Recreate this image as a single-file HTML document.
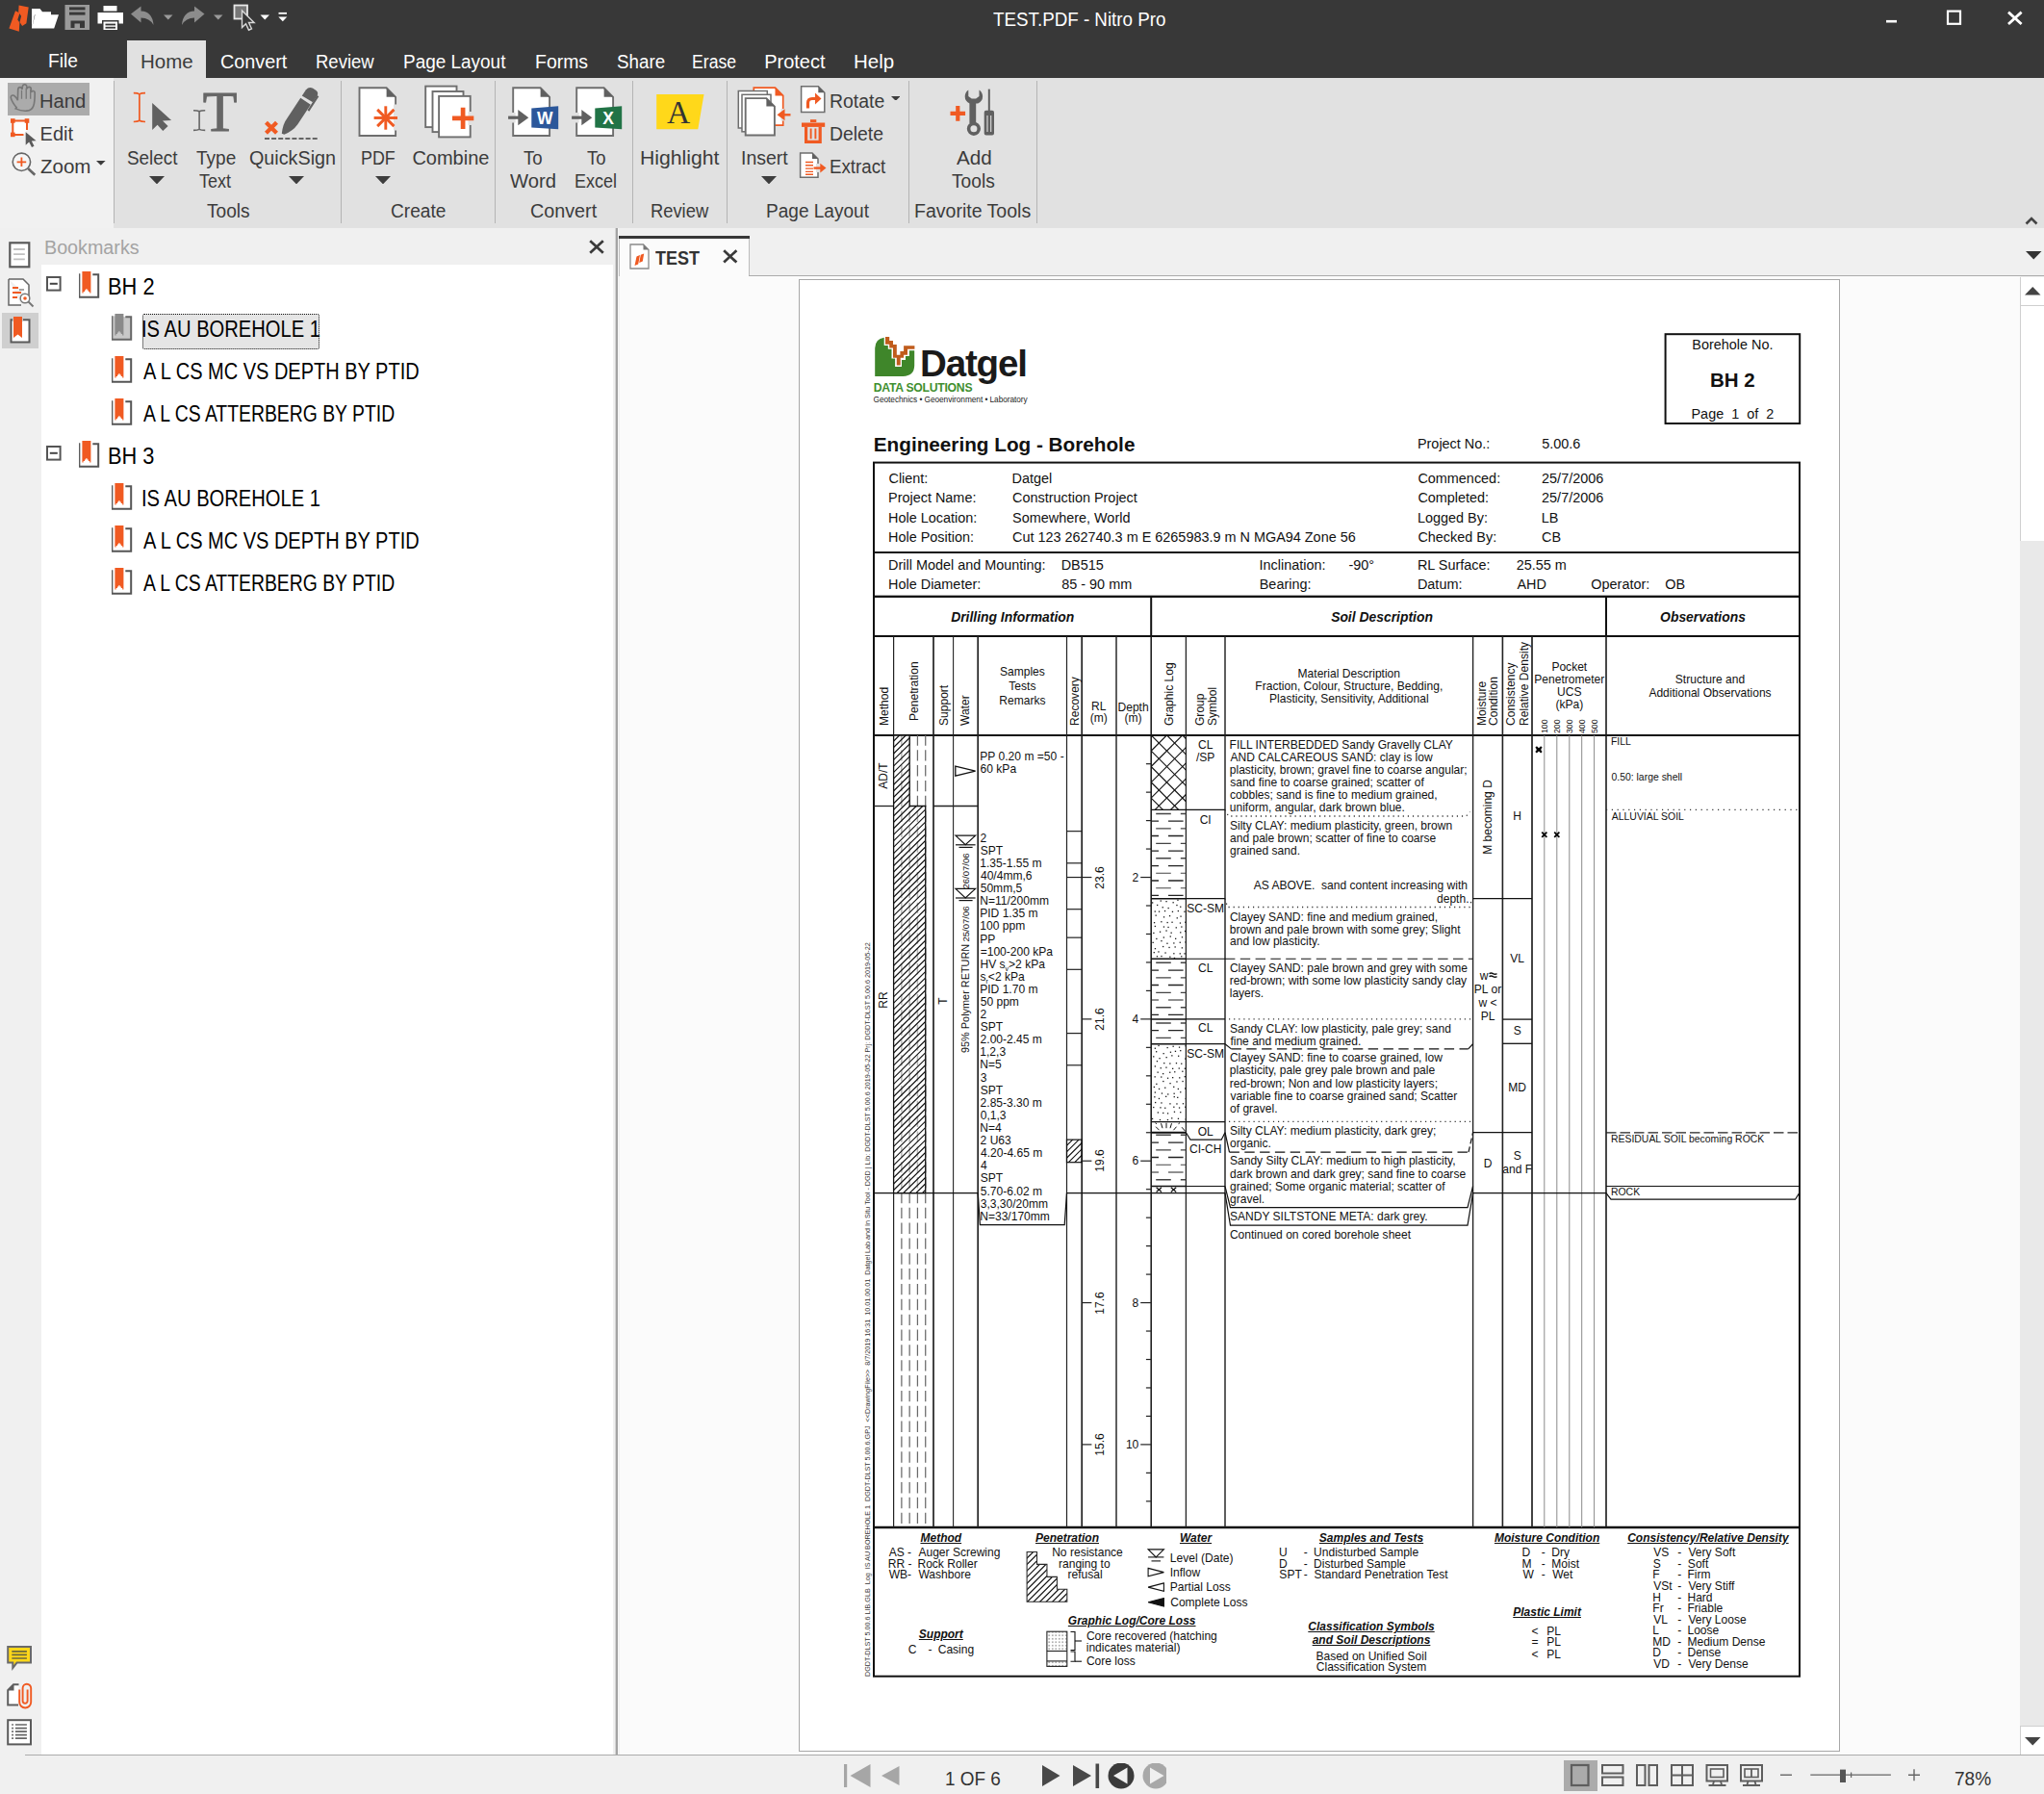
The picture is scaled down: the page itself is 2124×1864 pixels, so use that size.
<!DOCTYPE html>
<html><head><meta charset="utf-8"><title>TEST.PDF - Nitro Pro</title>
<style>
html,body{margin:0;padding:0}
body{width:2124px;height:1864px;overflow:hidden;position:relative;background:#f0f0f0;font-family:"Liberation Sans",sans-serif;color:#111}
.a{position:absolute;width:0;height:0}
.a span{position:absolute;line-height:1em;white-space:pre;left:0}
.a .c{transform:translateX(-50%)}
.a .r{transform:translateX(-100%)}
.a span span{position:static}
.f0{font-size:38.5px;top:-32px}
.f1{font-size:12.2px;top:-10px}
.f2{font-size:8.3px;top:-7px}
.f3{font-size:14.43px;top:-12px}
.f4{font-size:20.5px;top:-17px}
.f5{font-size:20.72px;top:-17px}
.f6{font-size:13.9px;top:-11px}
.f7{font-size:12.05px;top:-10px}
.f8{font-size:8.7px;top:-7px}
.f9{font-size:9.5px;top:-8px}
.f10{font-size:10.9px;top:-9px}
.f11{font-size:10.45px;top:-8px}
.f12{font-size:12px;top:-10px}
.f13{font-size:7.2px;top:-6px}
.f14{font-size:20px;top:-17px}
.f15{font-size:23px;top:-19px}
.b{position:absolute;display:block}
.ov{position:absolute;left:0;top:0;pointer-events:none}
</style></head>
<body>
<div class="b" style="left:0px;top:0px;width:2124px;height:81px;background:#383838;"></div>
<div class="b" style="left:132px;top:42px;width:82px;height:39px;background:#e1e1e1;"></div>
<div class="b" style="left:0px;top:81px;width:2124px;height:156px;background:#e1e1e1;"></div>
<div class="b" style="left:0px;top:81px;width:118px;height:156px;background:#f1f1f1;"></div>
<div class="b" style="left:0px;top:237px;width:2124px;height:1627px;background:#f0f0f0;"></div>
<div class="b" style="left:117.8px;top:84px;width:1.3px;height:148px;background:#b4b4b4;"></div>
<div class="b" style="left:353.6px;top:84px;width:1.3px;height:148px;background:#b4b4b4;"></div>
<div class="b" style="left:514.2px;top:84px;width:1.3px;height:148px;background:#b4b4b4;"></div>
<div class="b" style="left:657.1px;top:84px;width:1.3px;height:148px;background:#b4b4b4;"></div>
<div class="b" style="left:754.9px;top:84px;width:1.3px;height:148px;background:#b4b4b4;"></div>
<div class="b" style="left:944px;top:84px;width:1.3px;height:148px;background:#b4b4b4;"></div>
<div class="b" style="left:1076.8px;top:84px;width:1.3px;height:148px;background:#b4b4b4;"></div>
<div class="a" style="left:1031.92px;top:27px"><span class="l f4" style="color:#fff;transform:scaleX(0.9160);transform-origin:0 0;">TEST.PDF - Nitro Pro</span></div>
<svg class="b" style="left:1955px;top:8px" width="160" height="24" viewBox="0 0 160 24"><path d="M5 14.2 h11" stroke="#fff" stroke-width="2.6"/><rect x="69" y="3.6" width="13" height="13.2" fill="none" stroke="#fff" stroke-width="2.2"/><path d="M132 4.6 l13.6 12.4 M145.6 4.6 l-13.6 12.4" stroke="#fff" stroke-width="2.8"/></svg>
<svg class="b" style="left:0px;top:0px" width="310" height="42" viewBox="0 0 310 42">
<path d="M9.400 29.400 L16 11.300 L20.500 13.600 L18.300 20.500 L20.400 23.600 L19.800 32.800 Z" fill="#f05a22"/>
<path d="M19.600 5.500 L29.700 7.400 L27.400 24.300 L23.100 27 L20.500 23.100 L22.100 16.800 L19.200 12.500 Z" fill="#f05a22"/>
<path d="M33 29.500 V9 h8.500 l2.500 3.300 h9 v3 h-17 z M36.500 15.300 h24.500 l-4.800 14.200 h-23.200 z" fill="#fff"/>
<rect x="67.5" y="5" width="25.5" height="26" fill="#9a9a9a"/><rect x="72" y="7.4" width="16.5" height="3" fill="#383838"/><rect x="72" y="12.6" width="16.5" height="3" fill="#383838"/><path d="M73.5 21.5 h14.5 v7.5 h-5 v-4.5 h-5.5 v4.5 h-4 z" fill="#383838"/>
<path d="M107.5 6 h14 v5.5 h-14z M101.5 13 h26.5 v11.5 h-4.500 v-3.5 h-17.500 v3.5 h-4.500z M107.5 22.6 h14.5 v8.4 h-14.500z" fill="#fff"/><rect x="109.500" y="24.6" width="10.500" height="1.800" fill="#383838"/><rect x="109.500" y="27.8" width="10.500" height="1.800" fill="#383838"/>
<path d="M136 14.5 l10.5 -8 v5 q12 0.500 13 14.500 q-4 -7.500 -13 -7.500 v5 z" fill="#8c8c8c"/>
<path d="M170 15.5 h9.500 l-4.750 5 z" fill="#9a9a9a"/>
<path d="M212.500 14.500 l-10.500 -8 v5 q-12 0.500 -13 14.500 q4 -7.500 13 -7.500 v5 z" fill="#8c8c8c"/>
<path d="M222 15.500 h9.500 l-4.750 5 z" fill="#9a9a9a"/>
<rect x="243.500" y="5.500" width="13.500" height="14" fill="#777" stroke="#e8e8e8" stroke-width="1.800"/>
<path d="M251.500 11 v17.500 l4 -3.800 l3 6.500 l3 -1.400 l-3 -6.300 h5.600 z" fill="#383838" stroke="#d8d8d8" stroke-width="1.400"/>
<path d="M270.500 15.500 h9.500 l-4.750 5 z" fill="#fff"/>
<path d="M289.500 13.800 h8.500" stroke="#fff" stroke-width="1.800"/><path d="M289.300 17.500 h9 l-4.500 4.800 z" fill="#fff"/>
</svg>
<div class="a" style="left:49.56px;top:70px"><span class="l f14" style="color:#fff;transform:scaleX(0.9597);transform-origin:0 0;">File</span></div>
<div class="a" style="left:145.96px;top:71px"><span class="l f14" style="color:#3b3b3b;transform:scaleX(1.0255);transform-origin:0 0;">Home</span></div>
<div class="a" style="left:229.41px;top:71px"><span class="l f14" style="color:#fff;transform:scaleX(0.9899);transform-origin:0 0;">Convert</span></div>
<div class="a" style="left:327.92px;top:71px"><span class="l f14" style="color:#fff;transform:scaleX(0.9250);transform-origin:0 0;">Review</span></div>
<div class="a" style="left:419.38px;top:71px"><span class="l f14" style="color:#fff;transform:scaleX(0.9476);transform-origin:0 0;">Page Layout</span></div>
<div class="a" style="left:556.34px;top:71px"><span class="l f14" style="color:#fff;transform:scaleX(0.9724);transform-origin:0 0;">Forms</span></div>
<div class="a" style="left:640.66px;top:71px"><span class="l f14" style="color:#fff;transform:scaleX(0.9380);transform-origin:0 0;">Share</span></div>
<div class="a" style="left:719.39px;top:71px"><span class="l f14" style="color:#fff;transform:scaleX(0.8815);transform-origin:0 0;">Erase</span></div>
<div class="a" style="left:794.2px;top:71px"><span class="l f14" style="color:#fff;transform:scaleX(1.0000);transform-origin:0 0;">Protect</span></div>
<div class="a" style="left:887.16px;top:71px"><span class="l f14" style="color:#fff;transform:scaleX(1.0258);transform-origin:0 0;">Help</span></div>
<div class="b" style="left:8px;top:86px;width:85px;height:33.7px;background:#ababab;"></div>
<div class="a" style="left:41.29px;top:112px"><span class="l f14" style="color:#3b3b3b;transform:scaleX(1.0089);transform-origin:0 0;">Hand</span></div>
<div class="a" style="left:41.6px;top:146px"><span class="l f14" style="color:#3b3b3b;transform:scaleX(1.0000);transform-origin:0 0;">Edit</span></div>
<div class="a" style="left:41.68px;top:180px"><span class="l f14" style="color:#3b3b3b;transform:scaleX(1.0264);transform-origin:0 0;">Zoom</span></div>
<div class="a" style="left:131.55px;top:171px"><span class="l f14" style="color:#3b3b3b;transform:scaleX(0.9451);transform-origin:0 0;">Select</span></div>
<div class="a" style="left:203.62px;top:171px"><span class="l f14" style="color:#3b3b3b;transform:scaleX(0.9501);transform-origin:0 0;">Type</span></div>
<div class="a" style="left:207.44px;top:195px"><span class="l f14" style="color:#3b3b3b;transform:scaleX(0.9006);transform-origin:0 0;">Text</span></div>
<div class="a" style="left:258.51px;top:171px"><span class="l f14" style="color:#3b3b3b;transform:scaleX(0.9876);transform-origin:0 0;">QuickSign</span></div>
<div class="a" style="left:214.52px;top:226px"><span class="l f14" style="color:#3b3b3b;transform:scaleX(0.9561);transform-origin:0 0;">Tools</span></div>
<div class="a" style="left:375.27px;top:171px"><span class="l f14" style="color:#3b3b3b;transform:scaleX(0.8939);transform-origin:0 0;">PDF</span></div>
<div class="a" style="left:428.4px;top:171px"><span class="l f14" style="color:#3b3b3b;transform:scaleX(1.0000);transform-origin:0 0;">Combine</span></div>
<div class="a" style="left:406.44px;top:226px"><span class="l f14" style="color:#3b3b3b;transform:scaleX(0.9553);transform-origin:0 0;">Create</span></div>
<div class="a" style="left:544.23px;top:171px"><span class="l f14" style="color:#3b3b3b;transform:scaleX(0.9296);transform-origin:0 0;">To</span></div>
<div class="a" style="left:530.2px;top:195px"><span class="l f14" style="color:#3b3b3b;transform:scaleX(1.0108);transform-origin:0 0;">Word</span></div>
<div class="a" style="left:610.33px;top:171px"><span class="l f14" style="color:#3b3b3b;transform:scaleX(0.9246);transform-origin:0 0;">To</span></div>
<div class="a" style="left:597.46px;top:195px"><span class="l f14" style="color:#3b3b3b;transform:scaleX(0.8980);transform-origin:0 0;">Excel</span></div>
<div class="a" style="left:551.21px;top:226px"><span class="l f14" style="color:#3b3b3b;transform:scaleX(0.9870);transform-origin:0 0;">Convert</span></div>
<div class="a" style="left:665.01px;top:171px"><span class="l f14" style="color:#3b3b3b;transform:scaleX(1.0591);transform-origin:0 0;">Highlight</span></div>
<div class="a" style="left:676.13px;top:226px"><span class="l f14" style="color:#3b3b3b;transform:scaleX(0.9172);transform-origin:0 0;">Review</span></div>
<div class="a" style="left:769.74px;top:171px"><span class="l f14" style="color:#3b3b3b;transform:scaleX(0.9751);transform-origin:0 0;">Insert</span></div>
<div class="a" style="left:862.05px;top:112px"><span class="l f14" style="color:#3b3b3b;transform:scaleX(0.9717);transform-origin:0 0;">Rotate</span></div>
<div class="a" style="left:862.05px;top:146px"><span class="l f14" style="color:#3b3b3b;transform:scaleX(0.9693);transform-origin:0 0;">Delete</span></div>
<div class="a" style="left:862.1px;top:180px"><span class="l f14" style="color:#3b3b3b;transform:scaleX(0.9356);transform-origin:0 0;">Extract</span></div>
<div class="a" style="left:795.78px;top:226px"><span class="l f14" style="color:#3b3b3b;transform:scaleX(0.9521);transform-origin:0 0;">Page Layout</span></div>
<div class="a" style="left:993.7px;top:171px"><span class="l f14" style="color:#3b3b3b;transform:scaleX(1.0320);transform-origin:0 0;">Add</span></div>
<div class="a" style="left:989.22px;top:195px"><span class="l f14" style="color:#3b3b3b;transform:scaleX(0.9583);transform-origin:0 0;">Tools</span></div>
<div class="a" style="left:950.44px;top:226px"><span class="l f14" style="color:#3b3b3b;transform:scaleX(0.9762);transform-origin:0 0;">Favorite Tools</span></div>
<svg class="b" style="left:154.9px;top:183px" width="16" height="8.4" viewBox="0 0 16 8.4"><path d="M0 0 h16 l-8 8.4 z" fill="#3d3d3d"/></svg>
<svg class="b" style="left:299.9px;top:183px" width="16" height="8.4" viewBox="0 0 16 8.4"><path d="M0 0 h16 l-8 8.4 z" fill="#3d3d3d"/></svg>
<svg class="b" style="left:390.3px;top:183px" width="16" height="8.4" viewBox="0 0 16 8.4"><path d="M0 0 h16 l-8 8.4 z" fill="#3d3d3d"/></svg>
<svg class="b" style="left:791.4px;top:183px" width="16" height="8.4" viewBox="0 0 16 8.4"><path d="M0 0 h16 l-8 8.4 z" fill="#3d3d3d"/></svg>
<svg class="b" style="left:100.4px;top:167.4px" width="9.6" height="4.8" viewBox="0 0 9.6 4.8"><path d="M0 0 h9.6 l-4.8 4.8 z" fill="#3d3d3d"/></svg>
<svg class="b" style="left:925.8px;top:99.6px" width="9.6" height="4.8" viewBox="0 0 9.6 4.8"><path d="M0 0 h9.6 l-4.8 4.8 z" fill="#3d3d3d"/></svg>
<svg class="ov" width="1100" height="200" viewBox="0 0 1100 200"><path d="M17 112 q-4 -5 -5 -9 q0 -2.500 2 -2.200 q2 0.500 4 4.500 l0.300 -10 q0.200 -2 1.800 -2 q1.600 0 1.800 2 l0.300 -2.500 q0.300 -2 1.900 -2 q1.700 0 1.900 2 l0.200 2 q0.400 -1.800 1.900 -1.700 q1.600 0.100 1.700 2 l0.100 3 q0.500 -1.500 1.800 -1.300 q1.500 0.300 1.400 2.200 q0 8 -1.200 11.500 q-1.300 4.200 -6 4.500 q-5 0.300 -9.800 -2 z" fill="#ababab" stroke="#777" stroke-width="1.400" transform="translate(11.300,116.600) scale(1.180,1.130) translate(-12,-116.300)"/>
<path d="M21.500 96 v8 M25.500 94 v10 M29.300 95.500 v8.500" stroke="#777" stroke-width="1.100" fill="none" transform="translate(11.300,116.600) scale(1.180,1.130) translate(-12,-116.300)"/>
<path d="M28 135 V125.500 H13.300 V139.900 H24.500" fill="#fff" stroke="#f05a22" stroke-width="2"/>
<rect x="11" y="123.2" width="4.600" height="4.600" fill="#f05a22"/>
<rect x="25.7" y="123.2" width="4.600" height="4.600" fill="#f05a22"/>
<rect x="11" y="137.6" width="4.600" height="4.600" fill="#f05a22"/>
<path d="M26.700 137.300 v13.500 l3.500 -3.200 l2.800 5.500 l2.500 -1.300 l-2.700 -5.300 l4.800 -0.300 z" fill="#5a5a5a"/>
<circle cx="22.400" cy="168.300" r="9.200" fill="#f6f6f6" stroke="#666" stroke-width="1.600"/><path d="M17.600 168.300 h9.600 M22.400 163.500 v9.600" stroke="#f05a22" stroke-width="1.800"/><path d="M29.300 175.300 l7 6.500" stroke="#666" stroke-width="2.600"/>
<path d="M144.900 97.500 V125.700 M138.800 96.700 q4.500 0 6.100 1.200 q1.600 -1.200 6.100 -1.200 M138.800 126.500 q4.500 0 6.100 -1.200 q1.600 1.200 6.100 1.200" fill="none" stroke="#f05a22" stroke-width="1.700"/>
<path d="M158.200 106.900 V135.100 L163.600 129.800 L169.300 135.900 L174.600 131 L169 125.500 L178.100 125.100 Z" fill="#606060"/>
<path d="M207.100 115.500 V134.700 M201 114.800 q4.500 0 6.100 1 q1.600 -1 6.100 -1 M201 135.400 q4.500 0 6.100 -1 q1.600 1 6.100 1" fill="none" stroke="#666" stroke-width="1.600"/>
<text x="210.700" y="136.200" font-family="Liberation Serif,serif" font-size="58.500" fill="#666" stroke="#666" stroke-width="0.900">T</text>
<path d="M276.500 127.200 l11 11 M287.500 127.200 l-11 11" stroke="#f05a22" stroke-width="4.200"/>
<path d="M275 144.100 H329.800" stroke="#666" stroke-width="2" stroke-dasharray="5 2.100"/>
<path d="M292.800 138.800 q1 -10 6 -16.500 l13.500 -20.500 l10.500 7 l-13.500 20.500 q-5 7 -14 10.500 z" fill="#606060"/>
<path d="M313.800 99.500 l4.200 -6.300 q3 -3.700 7.200 -1.500 l3.300 2.200 q3 2.500 0.800 6 l-4.200 6.400 z" fill="#606060"/>
<path d="M329.500 99 l1.800 1.200 l-10 15.500 l-1.800 -1.200 z" fill="#606060"/>
<path d="M373.5 91.3 H401.6 L411.1 100.8 V141 H373.5 Z" fill="#fff" stroke="#6e6e6e" stroke-width="1.9"/><path d="M401.6 91.3 V100.8 H411.1 Z" fill="#606060"/>
<rect x="409" y="108.500" width="4" height="27" fill="#e1e1e1"/>
<line x1="388.6" y1="122.5" x2="413" y2="122.5" stroke="#f05a22" stroke-width="2.900"/>
<line x1="392.173" y1="113.873" x2="409.427" y2="131.127" stroke="#f05a22" stroke-width="2.900"/>
<line x1="400.8" y1="110.3" x2="400.8" y2="134.7" stroke="#f05a22" stroke-width="2.900"/>
<line x1="409.427" y1="113.873" x2="392.173" y2="131.127" stroke="#f05a22" stroke-width="2.900"/>
<rect x="442.2" y="89.6" width="32.3" height="42.5" fill="#fff" stroke="#6e6e6e" stroke-width="1.900"/>
<rect x="449.5" y="95" width="32" height="42.1" fill="#fff" stroke="#6e6e6e" stroke-width="1.900"/>
<rect x="456.1" y="99.9" width="32.6" height="42.5" fill="#fff" stroke="#6e6e6e" stroke-width="1.900"/>
<rect x="486.500" y="116" width="4.500" height="14" fill="#e1e1e1"/>
<path d="M470 122.900 h22.300 M481.100 111.800 v22.300" stroke="#f05a22" stroke-width="4.700"/>
<path d="M533.2 91.3 H561.6 L571.1 100.8 V141 H533.2 Z" fill="#fff" stroke="#6e6e6e" stroke-width="1.9"/><path d="M561.6 91.3 V100.8 H571.1 Z" fill="#606060"/>
<rect x="530.7" y="117" width="5" height="10.500" fill="#e1e1e1"/>
<path d="M528.1 122.200 h12" stroke="#606060" stroke-width="3.200"/><path d="M538.3 114.100 v16.100 l11 -8.050 z" fill="#606060"/>
<path d="M552.3 112.600 L580.2 110.200 V134.200 L552.3 132.400 Z" fill="#2b579a"/>
<text x="566.2" y="129.200" font-family="Liberation Sans,sans-serif" font-size="17.500" font-weight="bold" fill="#fff" text-anchor="middle">W</text>
<path d="M599.2 91.3 H627.6 L637.1 100.8 V141 H599.2 Z" fill="#fff" stroke="#6e6e6e" stroke-width="1.9"/><path d="M627.6 91.3 V100.8 H637.1 Z" fill="#606060"/>
<rect x="596.7" y="117" width="5" height="10.500" fill="#e1e1e1"/>
<path d="M594.1 122.200 h12" stroke="#606060" stroke-width="3.200"/><path d="M604.3 114.100 v16.100 l11 -8.050 z" fill="#606060"/>
<path d="M618.3 112.600 L646.2 110.200 V134.200 L618.3 132.400 Z" fill="#217346"/>
<text x="632.2" y="129.200" font-family="Liberation Sans,sans-serif" font-size="17.500" font-weight="bold" fill="#fff" text-anchor="middle">X</text>
<path d="M682.200 98 H731.500 L725.300 134.300 H682.200 Z" fill="#ffd81a"/>
<text x="705.200" y="127.600" font-family="Liberation Serif,serif" font-size="33.500" fill="#333" text-anchor="middle">A</text>
<path d="M783.300 91.200 H805.500 L813.700 99.400 V130.200 H783.300 Z" fill="#fff" stroke="#f05a22" stroke-width="1.700"/><path d="M805.500 91.200 V99.400 H813.700 Z" fill="#f05a22"/>
<rect x="811.500" y="113" width="4.500" height="12.500" fill="#e1e1e1"/>
<rect x="767.300" y="94.500" width="30" height="38.500" fill="#fff" stroke="#6e6e6e" stroke-width="1.500"/>
<rect x="771" y="98.300" width="30" height="38.500" fill="#fff" stroke="#6e6e6e" stroke-width="1.500"/>
<path d="M774.7 102.1 H796.4 L804.9 110.6 V140.5 H774.7 Z" fill="#fff" stroke="#6e6e6e" stroke-width="1.9"/><path d="M796.4 102.1 V110.6 H804.9 Z" fill="#606060"/>
<path d="M821.500 119.300 h-8" stroke="#f05a22" stroke-width="2.400"/><path d="M815.500 113.300 v12 l-8 -6 z" fill="#f05a22"/>
<path d="M832.6 89.8 H850.3 L856.8 96.3 V116.5 H832.6 Z" fill="#fff" stroke="#6e6e6e" stroke-width="1.5"/><path d="M850.3 89.8 V96.3 H856.8 Z" fill="#606060"/>
<path d="M839.500 112.500 v-5.500 q0 -4.500 4.500 -4.500 h4" fill="none" stroke="#f05a22" stroke-width="3.200"/><path d="M847 96.500 l6.500 6 l-6.500 6 z" fill="#f05a22"/>
<path d="M833 129.700 h24.200" stroke="#f05a22" stroke-width="4.400"/><path d="M842 125.600 h6.300" stroke="#f05a22" stroke-width="2.800"/><path d="M837.600 132 v15.400 h14.600 v-15.400" fill="none" stroke="#f05a22" stroke-width="3.200"/><path d="M842.600 133.500 v10.800 M847.400 133.500 v10.800" stroke="#f05a22" stroke-width="1.900"/>
<path d="M831.6 159 H844 L850 165 V184.3 H831.6 Z" fill="#fff" stroke="#6e6e6e" stroke-width="1.5"/><path d="M844 159 V165 H850 Z" fill="#606060"/>
<path d="M837 168.500 h8 M837 171.800 h8 M837 175.100 h8 M837 178.400 h8 M837 181.200 h8" stroke="#f05a22" stroke-width="1.400"/>
<rect x="848" y="170" width="4" height="9" fill="#e1e1e1"/>
<path d="M845.500 174.600 h8" stroke="#f05a22" stroke-width="2.400"/><path d="M852.300 169.800 v9.600 l6.200 -4.800 z" fill="#f05a22"/>
<path d="M987.500 117.900 h15.600 M995.300 110.100 v15.600" stroke="#f05a22" stroke-width="4.200"/>
<path d="M1009.700 104 V128" stroke="#606060" stroke-width="4.600"/>
<path d="M1006.300 93.500 v6.500 l3.400 2.500 h4.400 l3.400 -2.500 v-6.500 q3.600 2.500 3.600 6.800 q0 5 -5 7.200 h-8.400 q-5 -2.200 -5 -7.200 q0 -4.300 3.600 -6.800 z" fill="#606060" transform="translate(0,0)"/>
<circle cx="1011.900" cy="133.800" r="5.300" fill="none" stroke="#606060" stroke-width="3.600"/>
<path d="M1011.900 106 V129" stroke="#606060" stroke-width="4.600"/>
<path d="M1027.800 92.600 V115" stroke="#606060" stroke-width="2"/>
<path d="M1022.700 116.800 q0 -2 2 -2 h6.300 q2 0 2 2 V138.500 q0 2 -2 2 h-6.300 q-2 0 -2 -2 Z" fill="#606060"/>
<path d="M1026 120 v17 M1029.700 120 v17" stroke="#e1e1e1" stroke-width="1.100"/></svg>
<div class="b" style="left:43px;top:275px;width:594px;height:1548px;background:#fff;"></div>
<div class="a" style="left:46.12px;top:264px"><span class="l f14" style="color:#a3a3a3;transform:scaleX(0.9857);transform-origin:0 0;">Bookmarks</span></div>
<svg class="b" style="left:611px;top:248px" width="18" height="17" viewBox="0 0 18 17"><path d="M2.2 2.2 l13.6 12.6 M15.8 2.2 l-13.6 12.600" stroke="#3a3a3a" stroke-width="2.700"/></svg>
<div class="b" style="left:2px;top:325.3px;width:38px;height:36.3px;background:#cfcfcf;"></div>
<svg class="b" style="left:6px;top:250px" width="30" height="30" viewBox="0 0 30 30"><rect x="4.300" y="2.300" width="20" height="25" fill="#fff" stroke="#5a5a5a" stroke-width="2.200"/><path d="M8.100 9 h11.700 M8.100 14.200 h11.700 M8.100 19.400 h11.700" stroke="#c0c0c0" stroke-width="1.800"/></svg>
<svg class="b" style="left:6px;top:288px" width="32" height="32" viewBox="0 0 32 32"><path d="M3 2 h15 l6 6 v13 M3 2 v27 h13" fill="#fff" stroke="#666" stroke-width="1.500"/><path d="M7 11 h6 M7 16 h9 M7 21 h5" stroke="#f05a22" stroke-width="2"/><path d="M14 13 h5" stroke="#888" stroke-width="1.500"/><circle cx="20" cy="22" r="4.800" fill="#fff" stroke="#777" stroke-width="1.500"/><circle cx="20" cy="22" r="1.800" fill="#f05a22"/><path d="M23.500 25.500 l5 5" stroke="#777" stroke-width="2"/></svg>
<svg class="b" style="left:9px;top:328px" width="24" height="30" viewBox="0 0 24 30"><rect x="2.500" y="4.300" width="19" height="23.200" fill="#fff" stroke="#5a5a5a" stroke-width="2"/><path d="M5 1 H14 V23 L9.500 19.500 L5 23 Z" fill="#f05a22"/><rect x="4" y="3.200" width="11" height="2.200" fill="#cfcfcf"/><path d="M5 1 H14 V6 H5 Z" fill="#f05a22"/></svg>
<svg class="b" style="left:48.2px;top:287.2px" width="16" height="16" viewBox="0 0 16 16"><rect x="1" y="1" width="13.600" height="13.600" fill="#fff" stroke="#555" stroke-width="2"/><path d="M3.800 7.800 h8" stroke="#444" stroke-width="2"/></svg>
<svg class="b" style="left:81.5px;top:282px" width="22.5" height="27.5" viewBox="0 0 22.5 27.5"><path d="M0.700 2.300 V26.700 H20.200 V3.300 H14.300" fill="none" stroke="none"/><path d="M0.700 2.300 V26.700" fill="none" stroke="#555" stroke-width="1.300"/><path d="M0 26.700 H20.200 V3.300 H14.300" fill="none" stroke="#555" stroke-width="2"/><path d="M3.400 0 H12.400 V22.500 H11.200 V21 H9.800 V19.500 H8.600 V18.300 H7.200 V19.500 H6 V21 H4.600 V22.500 H3.400 Z" fill="#f05a22"/></svg>
<div class="a" style="left:111.85px;top:306px"><span class="l f15" style="color:#000;transform:scaleX(0.9505);transform-origin:0 0;">BH 2</span></div>
<div class="b" style="left:148px;top:326.2px;width:184px;height:37px;background:#e5e5e5;border:1.5px dotted #111;border-radius:2px;box-sizing:border-box"></div>
<svg class="b" style="left:116.4px;top:326px" width="22.5" height="27.5" viewBox="0 0 22.5 27.5"><path d="M0.700 2.300 V26.700 H20.200 V3.300 H14.300" fill="#c8c8c8" stroke="none"/><path d="M0.700 2.300 V26.700" fill="none" stroke="#666" stroke-width="1.300"/><path d="M0 26.700 H20.200 V3.300 H14.300" fill="none" stroke="#666" stroke-width="2"/><path d="M3.400 0 H12.400 V22.500 H11.200 V21 H9.800 V19.500 H8.600 V18.300 H7.200 V19.500 H6 V21 H4.600 V22.500 H3.400 Z" fill="#8a8a8a"/></svg>
<div class="a" style="left:147.09px;top:350px"><span class="l f15" style="color:#000;transform:scaleX(0.8763);transform-origin:0 0;">IS AU BOREHOLE 1</span></div>
<svg class="b" style="left:116.4px;top:370px" width="22.5" height="27.5" viewBox="0 0 22.5 27.5"><path d="M0.700 2.300 V26.700 H20.200 V3.300 H14.300" fill="none" stroke="none"/><path d="M0.700 2.300 V26.700" fill="none" stroke="#555" stroke-width="1.300"/><path d="M0 26.700 H20.200 V3.300 H14.300" fill="none" stroke="#555" stroke-width="2"/><path d="M3.400 0 H12.400 V22.500 H11.200 V21 H9.800 V19.500 H8.600 V18.300 H7.200 V19.500 H6 V21 H4.600 V22.500 H3.400 Z" fill="#f05a22"/></svg>
<div class="a" style="left:148.9px;top:394px"><span class="l f15" style="color:#000;transform:scaleX(0.8693);transform-origin:0 0;">A L CS MC VS DEPTH BY PTID</span></div>
<svg class="b" style="left:116.4px;top:414px" width="22.5" height="27.5" viewBox="0 0 22.5 27.5"><path d="M0.700 2.300 V26.700 H20.200 V3.300 H14.300" fill="none" stroke="none"/><path d="M0.700 2.300 V26.700" fill="none" stroke="#555" stroke-width="1.300"/><path d="M0 26.700 H20.200 V3.300 H14.300" fill="none" stroke="#555" stroke-width="2"/><path d="M3.400 0 H12.400 V22.500 H11.200 V21 H9.800 V19.500 H8.600 V18.300 H7.200 V19.500 H6 V21 H4.600 V22.500 H3.400 Z" fill="#f05a22"/></svg>
<div class="a" style="left:148.9px;top:438px"><span class="l f15" style="color:#000;transform:scaleX(0.8421);transform-origin:0 0;">A L CS ATTERBERG BY PTID</span></div>
<svg class="b" style="left:48.2px;top:463.2px" width="16" height="16" viewBox="0 0 16 16"><rect x="1" y="1" width="13.600" height="13.600" fill="#fff" stroke="#555" stroke-width="2"/><path d="M3.800 7.800 h8" stroke="#444" stroke-width="2"/></svg>
<svg class="b" style="left:81.5px;top:458px" width="22.5" height="27.5" viewBox="0 0 22.5 27.5"><path d="M0.700 2.300 V26.700 H20.200 V3.300 H14.300" fill="none" stroke="none"/><path d="M0.700 2.300 V26.700" fill="none" stroke="#555" stroke-width="1.300"/><path d="M0 26.700 H20.200 V3.300 H14.300" fill="none" stroke="#555" stroke-width="2"/><path d="M3.400 0 H12.400 V22.500 H11.200 V21 H9.800 V19.500 H8.600 V18.300 H7.200 V19.500 H6 V21 H4.600 V22.500 H3.400 Z" fill="#f05a22"/></svg>
<div class="a" style="left:111.86px;top:482px"><span class="l f15" style="color:#000;transform:scaleX(0.9482);transform-origin:0 0;">BH 3</span></div>
<svg class="b" style="left:116.4px;top:502px" width="22.5" height="27.5" viewBox="0 0 22.5 27.5"><path d="M0.700 2.300 V26.700 H20.200 V3.300 H14.300" fill="none" stroke="none"/><path d="M0.700 2.300 V26.700" fill="none" stroke="#555" stroke-width="1.300"/><path d="M0 26.700 H20.200 V3.300 H14.300" fill="none" stroke="#555" stroke-width="2"/><path d="M3.400 0 H12.400 V22.500 H11.200 V21 H9.800 V19.500 H8.600 V18.300 H7.200 V19.500 H6 V21 H4.600 V22.500 H3.400 Z" fill="#f05a22"/></svg>
<div class="a" style="left:147.09px;top:526px"><span class="l f15" style="color:#000;transform:scaleX(0.8763);transform-origin:0 0;">IS AU BOREHOLE 1</span></div>
<svg class="b" style="left:116.4px;top:546px" width="22.5" height="27.5" viewBox="0 0 22.5 27.5"><path d="M0.700 2.300 V26.700 H20.200 V3.300 H14.300" fill="none" stroke="none"/><path d="M0.700 2.300 V26.700" fill="none" stroke="#555" stroke-width="1.300"/><path d="M0 26.700 H20.200 V3.300 H14.300" fill="none" stroke="#555" stroke-width="2"/><path d="M3.400 0 H12.400 V22.500 H11.200 V21 H9.800 V19.500 H8.600 V18.300 H7.200 V19.500 H6 V21 H4.600 V22.500 H3.400 Z" fill="#f05a22"/></svg>
<div class="a" style="left:148.9px;top:570px"><span class="l f15" style="color:#000;transform:scaleX(0.8693);transform-origin:0 0;">A L CS MC VS DEPTH BY PTID</span></div>
<svg class="b" style="left:116.4px;top:590px" width="22.5" height="27.5" viewBox="0 0 22.5 27.5"><path d="M0.700 2.300 V26.700 H20.200 V3.300 H14.300" fill="none" stroke="none"/><path d="M0.700 2.300 V26.700" fill="none" stroke="#555" stroke-width="1.300"/><path d="M0 26.700 H20.200 V3.300 H14.300" fill="none" stroke="#555" stroke-width="2"/><path d="M3.400 0 H12.400 V22.500 H11.200 V21 H9.800 V19.500 H8.600 V18.300 H7.200 V19.500 H6 V21 H4.600 V22.500 H3.400 Z" fill="#f05a22"/></svg>
<div class="a" style="left:148.9px;top:614px"><span class="l f15" style="color:#000;transform:scaleX(0.8421);transform-origin:0 0;">A L CS ATTERBERG BY PTID</span></div>
<svg class="b" style="left:5px;top:1707px" width="32" height="30" viewBox="0 0 32 30"><path d="M3.200 4.100 H27 V20.600 H12.500 L8.300 26 V20.600 H3.200 Z" fill="#ffd81a" stroke="#6a6a6a" stroke-width="2"/><path d="M7.300 8.800 h15.600 M7.300 12.400 h15.600 M7.300 16 h15.600" stroke="#6e6a3c" stroke-width="1.700"/></svg>
<svg class="b" style="left:5px;top:1746px" width="32" height="30" viewBox="0 0 32 30"><path d="M14.500 4.300 H9 L3.200 10.100 V25.500 H14" fill="#fff" stroke="#5e5e5e" stroke-width="2"/><path d="M9.500 4 V10.500 H3 Z" fill="#5e5e5e"/><path d="M23.600 9.500 v11.800 a2.500 2.500 0 0 1 -5 0 v-13.300 a4.300 4.300 0 0 1 8.600 0 v14.500 a6 6 0 0 1 -12 0 v-13" fill="none" stroke="#f05a22" stroke-width="1.900"/></svg>
<svg class="b" style="left:5px;top:1785px" width="32" height="31" viewBox="0 0 32 31"><rect x="3.200" y="2.200" width="23.800" height="25.200" fill="#fff" stroke="#5a5a5a" stroke-width="2"/><path d="M10.900 7 h12 M10.900 10.600 h12 M10.900 14.100 h12 M10.900 17.600 h12 M10.900 21.200 h12" stroke="#666" stroke-width="1.700"/><path d="M7 7 h2.100 M7 10.600 h2.100 M7 14.100 h2.100 M7 17.600 h2.100 M7 21.200 h2.100" stroke="#777" stroke-width="1.700"/></svg>
<div class="b" style="left:639px;top:237px;width:1px;height:1586px;background:#d4d4d4;"></div>
<div class="b" style="left:640px;top:237px;width:2px;height:1586px;background:#a3a3a3;"></div>
<div class="b" style="left:642px;top:237px;width:1px;height:1586px;background:#f6f6f6;"></div>
<div class="b" style="left:643.6px;top:287px;width:1455px;height:1536px;background:#fbfbfb;"></div>
<div class="b" style="left:643px;top:245px;width:136px;height:42px;background:#fbfbfb;border-left:1px solid #bdbdbd;border-right:1px solid #bdbdbd;box-sizing:border-box"></div>
<div class="b" style="left:643px;top:245px;width:136px;height:3px;background:#383838;"></div>
<div class="b" style="left:778px;top:286px;width:1346px;height:1.4px;background:#ababab;"></div>
<svg class="b" style="left:654px;top:253px" width="22" height="27" viewBox="0 0 22 27"><path d="M1 1 h13.500 l5.500 5.500 v19.500 h-19 z" fill="#fff" stroke="#8a8a8a" stroke-width="1.300"/><path d="M14.500 1 v5.500 h5.500 z" fill="#777"/><path d="M7.500 13.500 l3.500 -1.500 l-1.800 9.500 l-3.700 1.500 z M11.800 11.800 l3.400 -1.300 l-1.400 8 l-3.600 1.600 z" fill="#f05a22"/></svg>
<div class="a" style="left:680.82px;top:275px"><span class="l f4" style="color:#333;font-weight:bold;transform:scaleX(0.8757);transform-origin:0 0;">TEST</span></div>
<svg class="b" style="left:750px;top:258px" width="18" height="17" viewBox="0 0 18 17"><path d="M2.200 2.200 l13.200 12.400 M15.400 2.200 l-13.200 12.400" stroke="#3a3a3a" stroke-width="2.700"/></svg>
<svg class="b" style="left:2104px;top:224px" width="14" height="10" viewBox="0 0 14 10"><path d="M1.500 8.500 l5.500 -5.500 l5.500 5.500" fill="none" stroke="#444" stroke-width="2.600"/></svg>
<svg class="b" style="left:2104.5px;top:261px" width="17" height="9" viewBox="0 0 17 9"><path d="M0 0 h16.500 l-8.250 8.500 z" fill="#333"/></svg>
<div class="b" style="left:830px;top:290.4px;width:1082px;height:1529.5px;background:#fff;border:1px solid #a8a8a8;box-sizing:border-box"></div>
<div class="b" style="left:2098.5px;top:287.5px;width:25.5px;height:1536px;background:#e9e9e9;"></div>
<div class="b" style="left:2098.5px;top:287.5px;width:25.5px;height:274.5px;background:#fff;border-left:1px solid #cfcfcf;box-sizing:border-box"></div>
<div class="b" style="left:2098.5px;top:316.5px;width:25.5px;height:1px;background:#cfcfcf;"></div>
<div class="b" style="left:2098.5px;top:1793px;width:25.5px;height:30px;background:#fff;border-left:1px solid #cfcfcf;border-top:1px solid #cfcfcf;box-sizing:border-box"></div>
<svg class="b" style="left:2103.5px;top:298px" width="17" height="9" viewBox="0 0 17 9"><path d="M0 8.500 h16.500 l-8.250 -8.500 z" fill="#444"/></svg>
<svg class="b" style="left:2103.5px;top:1804.5px" width="17" height="9" viewBox="0 0 17 9"><path d="M0 0 h16.500 l-8.250 8.500 z" fill="#444"/></svg>
<div class="b" style="left:0px;top:1824px;width:2124px;height:40px;background:#f0f0f0;"></div>
<div class="b" style="left:26px;top:1823px;width:2098px;height:1px;background:#ababab;"></div>
<svg class="b" style="left:876px;top:1832px" width="70" height="26" viewBox="0 0 70 26"><path d="M1 1 h3.200 v24 h-3.200 z M28.500 1 v24 l-21 -12 z" fill="#a6a6a6"/><path d="M58.500 3 v20 l-18.500 -10 z" fill="#a6a6a6"/></svg>
<div class="a" style="left:981.58px;top:1855px"><span class="l f14" style="color:#333;transform:scaleX(0.9473);transform-origin:0 0;">1 OF 6</span></div>
<svg class="b" style="left:1082px;top:1832px" width="130" height="27" viewBox="0 0 130 27"><path d="M1 2 v22 l18.500 -11 z" fill="#484848"/><path d="M33 2 v22 l19 -11 z M56.500 0.500 h3.600 v25.500 h-3.600 z" fill="#484848"/><circle cx="83" cy="13" r="13.500" fill="#3a3a3a"/><path d="M89.500 4.500 v17 l-14.500 -8.500 z" fill="#f0f0f0"/><circle cx="119" cy="13" r="13.500" fill="#a8a8a8"/><path d="M113 4.500 v17 l14.500 -8.500 z" fill="#f0f0f0"/></svg>
<div class="b" style="left:1625px;top:1829px;width:35px;height:32px;background:#ababab;"></div>
<svg class="b" style="left:1628px;top:1830px" width="210" height="30" viewBox="0 0 210 30"><rect x="5" y="4" width="17.500" height="21" fill="none" stroke="#5e5e5e" stroke-width="2.200"/>
<rect x="37" y="4" width="21.500" height="8.500" fill="none" stroke="#5e5e5e" stroke-width="2"/><rect x="37" y="16.500" width="21.500" height="8.500" fill="none" stroke="#5e5e5e" stroke-width="2"/>
<rect x="73" y="4" width="8.500" height="21" fill="none" stroke="#5e5e5e" stroke-width="2"/><rect x="85.500" y="4" width="8.500" height="21" fill="none" stroke="#5e5e5e" stroke-width="2"/>
<rect x="109" y="4" width="22" height="21" fill="none" stroke="#5e5e5e" stroke-width="2"/><path d="M120 4 v21 M109 14.500 h22" stroke="#5e5e5e" stroke-width="2"/>
<rect x="145.500" y="4" width="21.500" height="16.500" fill="none" stroke="#5e5e5e" stroke-width="2"/><rect x="149.500" y="8" width="13.500" height="8.500" fill="none" stroke="#5e5e5e" stroke-width="1.600"/><path d="M153 20.500 l-1 4 M160 20.500 l1 4 M147.500 25 h18" stroke="#5e5e5e" stroke-width="1.800"/>
<rect x="181" y="4" width="22" height="16.500" fill="none" stroke="#5e5e5e" stroke-width="2"/><rect x="185" y="8" width="14" height="8.500" fill="none" stroke="#5e5e5e" stroke-width="1.600"/><path d="M192 8 v8.500 M188.500 20.500 l-1 4 M195.500 20.500 l1 4 M183 25 h18" stroke="#5e5e5e" stroke-width="1.800"/>
</svg>
<svg class="b" style="left:1848px;top:1834px" width="150" height="22" viewBox="0 0 150 22"><path d="M2 10.200 h12" stroke="#666" stroke-width="1.400"/><path d="M33.300 10.200 h83.600" stroke="#666" stroke-width="1.200"/><path d="M75.600 7.500 v5.400" stroke="#666" stroke-width="1.200"/><rect x="64" y="4.600" width="6" height="13.400" fill="#555"/><path d="M135 10.200 h12 M141 4.200 v12" stroke="#666" stroke-width="1.400"/></svg>
<div class="a" style="left:2030.55px;top:1855px"><span class="l f14" style="color:#333;transform:scaleX(0.9530);transform-origin:0 0;">78%</span></div>
<svg class="ov" width="2124" height="1864" viewBox="0 0 2124 1864"><g>
<path d="M909.2 391 V361.7 Q909.4 352 918.7 350.7 V359.1 H922.8 V362.8 H926.5 V372.6 H930.1 V381 H937 V374 H941 V370.1 H944.9 V364.2 H950.2 V379.8 Q950 390.6 938.4 391 Z" fill="#3f862a"/>
<path d="M920 350 H924.2 V353.9 H928 V358 H931.8 V368.7 H935.4 V365.1 H939.1 V359.2 H950.4 V362.8 H943 V368.7 H939.1 V371.8 H935.7 V379.6 H931.8 V371.8 H928 V361.4 H924.2 V357.8 H920 Z" fill="#c05c1c"/>
</g>
<rect x="1730.6" y="347.2" width="139.6" height="92.8" fill="none" stroke="#111" stroke-width="2"/>
<rect x="908" y="480.6" width="962" height="139.2" fill="none" stroke="#111" stroke-width="2"/>
<line x1="908" y1="574" x2="1870" y2="574" stroke="#111" stroke-width="2"/>
<rect x="908" y="619.8" width="962" height="1121.9" fill="none" stroke="#111" stroke-width="2"/>
<line x1="908" y1="661" x2="1870" y2="661" stroke="#111" stroke-width="2"/>
<line x1="908" y1="764" x2="1870" y2="764" stroke="#111" stroke-width="2.2"/>
<line x1="908" y1="1587" x2="1870" y2="1587" stroke="#111" stroke-width="2.4"/>
<line x1="1196.2" y1="619.8" x2="1196.2" y2="661" stroke="#111" stroke-width="2"/>
<line x1="1196.2" y1="661" x2="1196.2" y2="1587" stroke="#1a1a1a" stroke-width="1.55"/>
<line x1="1669" y1="619.8" x2="1669" y2="661" stroke="#111" stroke-width="2"/>
<line x1="1669" y1="661" x2="1669" y2="1587" stroke="#1a1a1a" stroke-width="1.6"/>
<line x1="928.6" y1="661" x2="928.6" y2="1587" stroke="#222" stroke-width="1.2"/>
<line x1="970" y1="661" x2="970" y2="1587" stroke="#222" stroke-width="1.7"/>
<line x1="990.6" y1="661" x2="990.6" y2="1587" stroke="#222" stroke-width="1.1"/>
<line x1="1016.2" y1="661" x2="1016.2" y2="1587" stroke="#222" stroke-width="1.7"/>
<line x1="1108.5" y1="661" x2="1108.5" y2="1587" stroke="#222" stroke-width="1.2"/>
<line x1="1124.2" y1="661" x2="1124.2" y2="1587" stroke="#222" stroke-width="1.7"/>
<line x1="1160" y1="661" x2="1160" y2="1587" stroke="#222" stroke-width="1.45"/>
<line x1="1232.4" y1="661" x2="1232.4" y2="1587" stroke="#222" stroke-width="1.3"/>
<line x1="1273" y1="661" x2="1273" y2="1587" stroke="#222" stroke-width="1.45"/>
<line x1="1530.6" y1="661" x2="1530.6" y2="1587" stroke="#222" stroke-width="1.4"/>
<line x1="1561.4" y1="661" x2="1561.4" y2="1587" stroke="#222" stroke-width="1.6"/>
<line x1="1592" y1="661" x2="1592" y2="1587" stroke="#222" stroke-width="1.7"/>
<line x1="1604.8" y1="764" x2="1604.8" y2="1587" stroke="#8a8a8a" stroke-width="1"/>
<line x1="1617.8" y1="764" x2="1617.8" y2="1587" stroke="#8a8a8a" stroke-width="1"/>
<line x1="1630.8" y1="764" x2="1630.8" y2="1587" stroke="#8a8a8a" stroke-width="1"/>
<line x1="1643.7" y1="764" x2="1643.7" y2="1587" stroke="#8a8a8a" stroke-width="1"/>
<line x1="1656.6" y1="764" x2="1656.6" y2="1587" stroke="#8a8a8a" stroke-width="1"/>
<line x1="908" y1="837.5" x2="928.6" y2="837.5" stroke="#222" stroke-width="1.3"/>
<line x1="908" y1="1239.6" x2="1016.2" y2="1239.6" stroke="#111" stroke-width="1.3"/>
<line x1="1108.5" y1="1239.6" x2="1273" y2="1239.6" stroke="#111" stroke-width="1.3"/>
<line x1="1530.6" y1="1239.6" x2="1669" y2="1239.6" stroke="#111" stroke-width="1.3"/>
<line x1="936.88" y1="764" x2="936.88" y2="1587" stroke="#6a6a6a" stroke-width="1.25" stroke-dasharray="11.4 4.45" stroke-dashoffset="0.65"/>
<line x1="945.16" y1="764" x2="945.16" y2="1587" stroke="#6a6a6a" stroke-width="1.25" stroke-dasharray="11.4 4.45" stroke-dashoffset="0.65"/>
<line x1="953.44" y1="764" x2="953.44" y2="1587" stroke="#6a6a6a" stroke-width="1.25" stroke-dasharray="11.4 4.45" stroke-dashoffset="0.65"/>
<line x1="961.72" y1="764" x2="961.72" y2="1587" stroke="#6a6a6a" stroke-width="1.25" stroke-dasharray="11.4 4.45" stroke-dashoffset="0.65"/>
<polygon points="928.6,764 945.16,764 945.16,837.5 961.72,837.5 961.72,1239.6 928.6,1239.6" fill="#fff" stroke="none" stroke-width="0"/>
<line x1="936.88" y1="764" x2="936.88" y2="1239.6" stroke="#b4b4b4" stroke-width="1.5" stroke-dasharray="11.4 4.45" stroke-dashoffset="0.65"/>
<line x1="945.16" y1="837.5" x2="945.16" y2="1239.6" stroke="#b4b4b4" stroke-width="1.5" stroke-dasharray="11.4 4.45" stroke-dashoffset="10.75"/>
<line x1="953.44" y1="837.5" x2="953.44" y2="1239.6" stroke="#b4b4b4" stroke-width="1.5" stroke-dasharray="11.4 4.45" stroke-dashoffset="10.75"/>
<defs><clipPath id="hc1"><polygon points="928.6,764 945.16,764 945.16,837.5 961.72,837.5 961.72,1239.6 928.6,1239.6"/></clipPath></defs>
<path clip-path="url(#hc1)" d="M927.6 758.02L962.72 723.43M927.6 764.5L962.72 729.91M927.6 770.99L962.72 736.39M927.6 777.47L962.72 742.87M927.6 783.95L962.72 749.35M927.6 790.43L962.72 755.83M927.6 796.9L962.72 762.31M927.6 803.38L962.72 768.79M927.6 809.87L962.72 775.27M927.6 816.35L962.72 781.75M927.6 822.83L962.72 788.23M927.6 829.31L962.72 794.71M927.6 835.78L962.72 801.19M927.6 842.26L962.72 807.67M927.6 848.75L962.72 814.15M927.6 855.23L962.72 820.63M927.6 861.71L962.72 827.11M927.6 868.19L962.72 833.59M927.6 874.67L962.72 840.07M927.6 881.14L962.72 846.55M927.6 887.62L962.72 853.03M927.6 894.11L962.72 859.51M927.6 900.59L962.72 865.99M927.6 907.07L962.72 872.47M927.6 913.54L962.72 878.95M927.6 920.02L962.72 885.43M927.6 926.5L962.72 891.91M927.6 932.99L962.72 898.39M927.6 939.47L962.72 904.87M927.6 945.95L962.72 911.35M927.6 952.43L962.72 917.83M927.6 958.91L962.72 924.31M927.6 965.38L962.72 930.79M927.6 971.87L962.72 937.27M927.6 978.35L962.72 943.75M927.6 984.83L962.72 950.23M927.6 991.31L962.72 956.71M927.6 997.78L962.72 963.19M927.6 1004.26L962.72 969.67M927.6 1010.75L962.72 976.15M927.6 1017.23L962.72 982.63M927.6 1023.71L962.72 989.11M927.6 1030.18L962.72 995.59M927.6 1036.66L962.72 1002.07M927.6 1043.14L962.72 1008.55M927.6 1049.62L962.72 1015.03M927.6 1056.1L962.72 1021.51M927.6 1062.58L962.72 1027.99M927.6 1069.06L962.72 1034.47M927.6 1075.54L962.72 1040.95M927.6 1082.02L962.72 1047.43M927.6 1088.5L962.72 1053.91M927.6 1094.98L962.72 1060.39M927.6 1101.46L962.72 1066.87M927.6 1107.94L962.72 1073.35M927.6 1114.42L962.72 1079.83M927.6 1120.9L962.72 1086.31M927.6 1127.38L962.72 1092.79M927.6 1133.87L962.72 1099.27M927.6 1140.35L962.72 1105.75M927.6 1146.83L962.72 1112.23M927.6 1153.31L962.72 1118.71M927.6 1159.78L962.72 1125.19M927.6 1166.26L962.72 1131.67M927.6 1172.74L962.72 1138.15M927.6 1179.22L962.72 1144.63M927.6 1185.7L962.72 1151.11M927.6 1192.18L962.72 1157.59M927.6 1198.66L962.72 1164.07M927.6 1205.14L962.72 1170.55M927.6 1211.62L962.72 1177.03M927.6 1218.1L962.72 1183.51M927.6 1224.58L962.72 1189.99M927.6 1231.06L962.72 1196.47M927.6 1237.54L962.72 1202.95M927.6 1244.02L962.72 1209.43M927.6 1250.5L962.72 1215.91M927.6 1256.98L962.72 1222.39M927.6 1263.46L962.72 1228.87M927.6 1269.94L962.72 1235.35M927.6 1276.42L962.72 1241.83M927.6 1282.9L962.72 1248.31" stroke="#111" stroke-width="1.2" fill="none"/>
<polygon points="928.6,764 945.16,764 945.16,837.5 961.72,837.5 961.72,1239.6 928.6,1239.6" fill="none" stroke="#111" stroke-width="1.3"/>
<line x1="970" y1="837.5" x2="1016.2" y2="837.5" stroke="#222" stroke-width="1.3"/>
<polygon points="992.8,796.1 1013.6,801.1 992.8,806.1" fill="none" stroke="#111" stroke-width="1.3"/>
<polygon points="993,868.2 1013.6,868.2 1003.2,877.8" fill="none" stroke="#111" stroke-width="1.2"/>
<line x1="993" y1="877.8" x2="1013.6" y2="877.8" stroke="#111" stroke-width="1.2"/>
<line x1="996.5" y1="880.4" x2="1010.6" y2="880.4" stroke="#111" stroke-width="1.2"/>
<polygon points="993,923.4 1013.6,923.4 1003.2,933" fill="none" stroke="#111" stroke-width="1.2"/>
<line x1="993" y1="933" x2="1013.6" y2="933" stroke="#111" stroke-width="1.2"/>
<line x1="996.5" y1="935.6" x2="1010.6" y2="935.6" stroke="#111" stroke-width="1.2"/>
<polyline points="1016.2,1239.6 1018.4,1272.7 1106.2,1272.7 1108.5,1239.6" fill="none" stroke="#111" stroke-width="1.2"/>
<line x1="1108.5" y1="863.65" x2="1124.2" y2="863.65" stroke="#222" stroke-width="1.2"/>
<line x1="1108.5" y1="896.81" x2="1124.2" y2="896.81" stroke="#222" stroke-width="1.2"/>
<line x1="1108.5" y1="911.54" x2="1124.2" y2="911.54" stroke="#222" stroke-width="1.2"/>
<line x1="1108.5" y1="944.69" x2="1124.2" y2="944.69" stroke="#222" stroke-width="1.2"/>
<line x1="1108.5" y1="974.16" x2="1124.2" y2="974.16" stroke="#222" stroke-width="1.2"/>
<line x1="1108.5" y1="1007.31" x2="1124.2" y2="1007.31" stroke="#222" stroke-width="1.2"/>
<line x1="1108.5" y1="1073.61" x2="1124.2" y2="1073.61" stroke="#222" stroke-width="1.2"/>
<line x1="1108.5" y1="1106.77" x2="1124.2" y2="1106.77" stroke="#222" stroke-width="1.2"/>
<defs><clipPath id="hc2"><polygon points="1108.5,1184.12 1124.2,1184.12 1124.2,1207.69 1108.5,1207.69"/></clipPath></defs>
<path clip-path="url(#hc2)" d="M1107.5 1178.5L1125.2 1160.8M1107.5 1184.9L1125.2 1167.2M1107.5 1191.3L1125.2 1173.6M1107.5 1197.7L1125.2 1180M1107.5 1204.1L1125.2 1186.4M1107.5 1210.5L1125.2 1192.8M1107.5 1216.9L1125.2 1199.2M1107.5 1223.3L1125.2 1205.6M1107.5 1229.7L1125.2 1212M1107.5 1236.1L1125.2 1218.4" stroke="#111" stroke-width="1.1" fill="none"/>
<rect x="1108.5" y="1184.12" width="15.7" height="23.57" fill="none" stroke="#111" stroke-width="1.2"/>
<line x1="1190.9" y1="793.67" x2="1196.2" y2="793.67" stroke="#222" stroke-width="1.2"/>
<line x1="1190.9" y1="823.14" x2="1196.2" y2="823.14" stroke="#222" stroke-width="1.2"/>
<line x1="1190.9" y1="852.6" x2="1196.2" y2="852.6" stroke="#222" stroke-width="1.2"/>
<line x1="1190.9" y1="882.07" x2="1196.2" y2="882.07" stroke="#222" stroke-width="1.2"/>
<line x1="1124.2" y1="911.54" x2="1134.4" y2="911.54" stroke="#222" stroke-width="1.2"/>
<line x1="1185.2" y1="911.54" x2="1196.2" y2="911.54" stroke="#222" stroke-width="1.2"/>
<line x1="1190.9" y1="941.01" x2="1196.2" y2="941.01" stroke="#222" stroke-width="1.2"/>
<line x1="1190.9" y1="970.48" x2="1196.2" y2="970.48" stroke="#222" stroke-width="1.2"/>
<line x1="1190.9" y1="999.94" x2="1196.2" y2="999.94" stroke="#222" stroke-width="1.2"/>
<line x1="1190.9" y1="1029.41" x2="1196.2" y2="1029.41" stroke="#222" stroke-width="1.2"/>
<line x1="1124.2" y1="1058.88" x2="1134.4" y2="1058.88" stroke="#222" stroke-width="1.2"/>
<line x1="1185.2" y1="1058.88" x2="1196.2" y2="1058.88" stroke="#222" stroke-width="1.2"/>
<line x1="1190.9" y1="1088.35" x2="1196.2" y2="1088.35" stroke="#222" stroke-width="1.2"/>
<line x1="1190.9" y1="1117.82" x2="1196.2" y2="1117.82" stroke="#222" stroke-width="1.2"/>
<line x1="1190.9" y1="1147.28" x2="1196.2" y2="1147.28" stroke="#222" stroke-width="1.2"/>
<line x1="1190.9" y1="1176.75" x2="1196.2" y2="1176.75" stroke="#222" stroke-width="1.2"/>
<line x1="1124.2" y1="1206.22" x2="1134.4" y2="1206.22" stroke="#222" stroke-width="1.2"/>
<line x1="1185.2" y1="1206.22" x2="1196.2" y2="1206.22" stroke="#222" stroke-width="1.2"/>
<line x1="1190.9" y1="1235.69" x2="1196.2" y2="1235.69" stroke="#222" stroke-width="1.2"/>
<line x1="1190.9" y1="1265.16" x2="1196.2" y2="1265.16" stroke="#222" stroke-width="1.2"/>
<line x1="1190.9" y1="1294.62" x2="1196.2" y2="1294.62" stroke="#222" stroke-width="1.2"/>
<line x1="1190.9" y1="1324.09" x2="1196.2" y2="1324.09" stroke="#222" stroke-width="1.2"/>
<line x1="1124.2" y1="1353.56" x2="1134.4" y2="1353.56" stroke="#222" stroke-width="1.2"/>
<line x1="1185.2" y1="1353.56" x2="1196.2" y2="1353.56" stroke="#222" stroke-width="1.2"/>
<line x1="1190.9" y1="1383.03" x2="1196.2" y2="1383.03" stroke="#222" stroke-width="1.2"/>
<line x1="1190.9" y1="1412.5" x2="1196.2" y2="1412.5" stroke="#222" stroke-width="1.2"/>
<line x1="1190.9" y1="1441.96" x2="1196.2" y2="1441.96" stroke="#222" stroke-width="1.2"/>
<line x1="1190.9" y1="1471.43" x2="1196.2" y2="1471.43" stroke="#222" stroke-width="1.2"/>
<line x1="1124.2" y1="1500.9" x2="1134.4" y2="1500.9" stroke="#222" stroke-width="1.2"/>
<line x1="1185.2" y1="1500.9" x2="1196.2" y2="1500.9" stroke="#222" stroke-width="1.2"/>
<line x1="1190.9" y1="1530.37" x2="1196.2" y2="1530.37" stroke="#222" stroke-width="1.2"/>
<line x1="1190.9" y1="1559.84" x2="1196.2" y2="1559.84" stroke="#222" stroke-width="1.2"/>
<defs><clipPath id="gc"><rect x="1196.2" y="764" width="36.2" height="475.6"/></clipPath></defs>
<defs><clipPath id="gc1"><rect x="1196.2" y="764" width="36.2" height="77.3325"/></clipPath></defs>
<g clip-path="url(#gc)"><g clip-path="url(#gc1)"><line x1="973.9" y1="872.04" x2="1173.9" y2="672.04" stroke="#111" stroke-width="1.15"/><line x1="973.9" y1="672.04" x2="1173.9" y2="872.04" stroke="#111" stroke-width="1.15"/><line x1="990.2" y1="872.04" x2="1190.2" y2="672.04" stroke="#111" stroke-width="1.15"/><line x1="990.2" y1="672.04" x2="1190.2" y2="872.04" stroke="#111" stroke-width="1.15"/><line x1="1006.5" y1="872.04" x2="1206.5" y2="672.04" stroke="#111" stroke-width="1.15"/><line x1="1006.5" y1="672.04" x2="1206.5" y2="872.04" stroke="#111" stroke-width="1.15"/><line x1="1022.8" y1="872.04" x2="1222.8" y2="672.04" stroke="#111" stroke-width="1.15"/><line x1="1022.8" y1="672.04" x2="1222.8" y2="872.04" stroke="#111" stroke-width="1.15"/><line x1="1039.1" y1="872.04" x2="1239.1" y2="672.04" stroke="#111" stroke-width="1.15"/><line x1="1039.1" y1="672.04" x2="1239.1" y2="872.04" stroke="#111" stroke-width="1.15"/><line x1="1055.4" y1="872.04" x2="1255.4" y2="672.04" stroke="#111" stroke-width="1.15"/><line x1="1055.4" y1="672.04" x2="1255.4" y2="872.04" stroke="#111" stroke-width="1.15"/><line x1="1071.7" y1="872.04" x2="1271.7" y2="672.04" stroke="#111" stroke-width="1.15"/><line x1="1071.7" y1="672.04" x2="1271.7" y2="872.04" stroke="#111" stroke-width="1.15"/><line x1="1088" y1="872.04" x2="1288" y2="672.04" stroke="#111" stroke-width="1.15"/><line x1="1088" y1="672.04" x2="1288" y2="872.04" stroke="#111" stroke-width="1.15"/><line x1="1104.3" y1="872.04" x2="1304.3" y2="672.04" stroke="#111" stroke-width="1.15"/><line x1="1104.3" y1="672.04" x2="1304.3" y2="872.04" stroke="#111" stroke-width="1.15"/><line x1="1120.6" y1="872.04" x2="1320.6" y2="672.04" stroke="#111" stroke-width="1.15"/><line x1="1120.6" y1="672.04" x2="1320.6" y2="872.04" stroke="#111" stroke-width="1.15"/><line x1="1136.9" y1="872.04" x2="1336.9" y2="672.04" stroke="#111" stroke-width="1.15"/><line x1="1136.9" y1="672.04" x2="1336.9" y2="872.04" stroke="#111" stroke-width="1.15"/><line x1="1153.2" y1="872.04" x2="1353.2" y2="672.04" stroke="#111" stroke-width="1.15"/><line x1="1153.2" y1="672.04" x2="1353.2" y2="872.04" stroke="#111" stroke-width="1.15"/><line x1="1169.5" y1="872.04" x2="1369.5" y2="672.04" stroke="#111" stroke-width="1.15"/><line x1="1169.5" y1="672.04" x2="1369.5" y2="872.04" stroke="#111" stroke-width="1.15"/><line x1="1185.8" y1="872.04" x2="1385.8" y2="672.04" stroke="#111" stroke-width="1.15"/><line x1="1185.8" y1="672.04" x2="1385.8" y2="872.04" stroke="#111" stroke-width="1.15"/><line x1="1202.1" y1="872.04" x2="1402.1" y2="672.04" stroke="#111" stroke-width="1.15"/><line x1="1202.1" y1="672.04" x2="1402.1" y2="872.04" stroke="#111" stroke-width="1.15"/><line x1="1218.4" y1="872.04" x2="1418.4" y2="672.04" stroke="#111" stroke-width="1.15"/><line x1="1218.4" y1="672.04" x2="1418.4" y2="872.04" stroke="#111" stroke-width="1.15"/><line x1="1234.7" y1="872.04" x2="1434.7" y2="672.04" stroke="#111" stroke-width="1.15"/><line x1="1234.7" y1="672.04" x2="1434.7" y2="872.04" stroke="#111" stroke-width="1.15"/><line x1="1251" y1="872.04" x2="1451" y2="672.04" stroke="#111" stroke-width="1.15"/><line x1="1251" y1="672.04" x2="1451" y2="872.04" stroke="#111" stroke-width="1.15"/></g><line x1="1175.6" y1="845.43" x2="1191.2" y2="845.43" stroke="#444" stroke-width="1.5"/><line x1="1201.2" y1="845.43" x2="1216.8" y2="845.43" stroke="#444" stroke-width="1.5"/><line x1="1226.8" y1="845.43" x2="1242.4" y2="845.43" stroke="#444" stroke-width="1.5"/><line x1="1188.4" y1="853.16" x2="1204" y2="853.16" stroke="#222" stroke-width="1.2"/><line x1="1214" y1="853.16" x2="1229.6" y2="853.16" stroke="#222" stroke-width="1.2"/><line x1="1175.6" y1="860.89" x2="1191.2" y2="860.89" stroke="#444" stroke-width="1.2"/><line x1="1201.2" y1="860.89" x2="1216.8" y2="860.89" stroke="#444" stroke-width="1.2"/><line x1="1226.8" y1="860.89" x2="1242.4" y2="860.89" stroke="#444" stroke-width="1.2"/><line x1="1188.4" y1="868.62" x2="1204" y2="868.62" stroke="#222" stroke-width="1.5"/><line x1="1214" y1="868.62" x2="1229.6" y2="868.62" stroke="#222" stroke-width="1.5"/><line x1="1175.6" y1="876.35" x2="1191.2" y2="876.35" stroke="#444" stroke-width="1.2"/><line x1="1201.2" y1="876.35" x2="1216.8" y2="876.35" stroke="#444" stroke-width="1.2"/><line x1="1226.8" y1="876.35" x2="1242.4" y2="876.35" stroke="#444" stroke-width="1.2"/><line x1="1188.4" y1="884.08" x2="1204" y2="884.08" stroke="#222" stroke-width="1.2"/><line x1="1214" y1="884.08" x2="1229.6" y2="884.08" stroke="#222" stroke-width="1.2"/><line x1="1175.6" y1="891.81" x2="1191.2" y2="891.81" stroke="#444" stroke-width="1.5"/><line x1="1201.2" y1="891.81" x2="1216.8" y2="891.81" stroke="#444" stroke-width="1.5"/><line x1="1226.8" y1="891.81" x2="1242.4" y2="891.81" stroke="#444" stroke-width="1.5"/><line x1="1188.4" y1="899.54" x2="1204" y2="899.54" stroke="#222" stroke-width="1.2"/><line x1="1214" y1="899.54" x2="1229.6" y2="899.54" stroke="#222" stroke-width="1.2"/><line x1="1175.6" y1="907.27" x2="1191.2" y2="907.27" stroke="#444" stroke-width="1.2"/><line x1="1201.2" y1="907.27" x2="1216.8" y2="907.27" stroke="#444" stroke-width="1.2"/><line x1="1226.8" y1="907.27" x2="1242.4" y2="907.27" stroke="#444" stroke-width="1.2"/><line x1="1188.4" y1="915" x2="1204" y2="915" stroke="#222" stroke-width="1.5"/><line x1="1214" y1="915" x2="1229.6" y2="915" stroke="#222" stroke-width="1.5"/><line x1="1175.6" y1="922.73" x2="1191.2" y2="922.73" stroke="#444" stroke-width="1.2"/><line x1="1201.2" y1="922.73" x2="1216.8" y2="922.73" stroke="#444" stroke-width="1.2"/><line x1="1226.8" y1="922.73" x2="1242.4" y2="922.73" stroke="#444" stroke-width="1.2"/><line x1="1188.4" y1="930.46" x2="1204" y2="930.46" stroke="#222" stroke-width="1.2"/><line x1="1214" y1="930.46" x2="1229.6" y2="930.46" stroke="#222" stroke-width="1.2"/><rect x="1197" y="937.3" width="1.3" height="1.3" fill="#1a1a1a"/><rect x="1205.6" y="935.4" width="1.3" height="1.3" fill="#1a1a1a"/><rect x="1211.4" y="936" width="1.3" height="1.3" fill="#1a1a1a"/><rect x="1218.5" y="937.1" width="1.3" height="1.3" fill="#1a1a1a"/><rect x="1223.3" y="934.6" width="1.3" height="1.3" fill="#1a1a1a"/><rect x="1232.3" y="935.9" width="1.3" height="1.3" fill="#1a1a1a"/><rect x="1202" y="939.8" width="1.3" height="1.3" fill="#1a1a1a"/><rect x="1207.6" y="942.1" width="1.3" height="1.3" fill="#1a1a1a"/><rect x="1213.5" y="942.9" width="1.3" height="1.3" fill="#1a1a1a"/><rect x="1222.3" y="939.9" width="1.3" height="1.3" fill="#1a1a1a"/><rect x="1226.1" y="941.6" width="1.3" height="1.3" fill="#1a1a1a"/><rect x="1199.6" y="946.4" width="1.3" height="1.3" fill="#1a1a1a"/><rect x="1203.9" y="946.5" width="1.3" height="1.3" fill="#1a1a1a"/><rect x="1209.9" y="945.9" width="1.3" height="1.3" fill="#1a1a1a"/><rect x="1217.8" y="946.7" width="1.3" height="1.3" fill="#1a1a1a"/><rect x="1223.7" y="945.9" width="1.3" height="1.3" fill="#1a1a1a"/><rect x="1230.3" y="946.6" width="1.3" height="1.3" fill="#1a1a1a"/><rect x="1200.5" y="950.5" width="1.3" height="1.3" fill="#1a1a1a"/><rect x="1208.9" y="952.2" width="1.3" height="1.3" fill="#1a1a1a"/><rect x="1214.9" y="951" width="1.3" height="1.3" fill="#1a1a1a"/><rect x="1222.6" y="953.2" width="1.3" height="1.3" fill="#1a1a1a"/><rect x="1226.4" y="951.5" width="1.3" height="1.3" fill="#1a1a1a"/><rect x="1198.9" y="958" width="1.3" height="1.3" fill="#1a1a1a"/><rect x="1206.2" y="957.1" width="1.3" height="1.3" fill="#1a1a1a"/><rect x="1212.5" y="957.9" width="1.3" height="1.3" fill="#1a1a1a"/><rect x="1217.4" y="957.6" width="1.3" height="1.3" fill="#1a1a1a"/><rect x="1225.8" y="958.4" width="1.3" height="1.3" fill="#1a1a1a"/><rect x="1231.2" y="957.6" width="1.3" height="1.3" fill="#1a1a1a"/><rect x="1199.7" y="961.8" width="1.3" height="1.3" fill="#1a1a1a"/><rect x="1208.8" y="962.4" width="1.3" height="1.3" fill="#1a1a1a"/><rect x="1213.4" y="962.8" width="1.3" height="1.3" fill="#1a1a1a"/><rect x="1221.6" y="963.2" width="1.3" height="1.3" fill="#1a1a1a"/><rect x="1227.2" y="962.4" width="1.3" height="1.3" fill="#1a1a1a"/><rect x="1198.2" y="968.8" width="1.3" height="1.3" fill="#1a1a1a"/><rect x="1204.9" y="967.6" width="1.3" height="1.3" fill="#1a1a1a"/><rect x="1211.4" y="966.4" width="1.3" height="1.3" fill="#1a1a1a"/><rect x="1216.5" y="968.6" width="1.3" height="1.3" fill="#1a1a1a"/><rect x="1226.1" y="968.2" width="1.3" height="1.3" fill="#1a1a1a"/><rect x="1230.9" y="966.9" width="1.3" height="1.3" fill="#1a1a1a"/><rect x="1201.2" y="974.8" width="1.3" height="1.3" fill="#1a1a1a"/><rect x="1208.7" y="973.4" width="1.3" height="1.3" fill="#1a1a1a"/><rect x="1215.6" y="972.4" width="1.3" height="1.3" fill="#1a1a1a"/><rect x="1221" y="974.7" width="1.3" height="1.3" fill="#1a1a1a"/><rect x="1227.8" y="973.1" width="1.3" height="1.3" fill="#1a1a1a"/><rect x="1197.5" y="978.7" width="1.3" height="1.3" fill="#1a1a1a"/><rect x="1206.3" y="977" width="1.3" height="1.3" fill="#1a1a1a"/><rect x="1212.3" y="979.6" width="1.3" height="1.3" fill="#1a1a1a"/><rect x="1219.2" y="979.3" width="1.3" height="1.3" fill="#1a1a1a"/><rect x="1225.6" y="978.6" width="1.3" height="1.3" fill="#1a1a1a"/><rect x="1231.4" y="978.3" width="1.3" height="1.3" fill="#1a1a1a"/><rect x="1199.8" y="985" width="1.3" height="1.3" fill="#1a1a1a"/><rect x="1208" y="982.9" width="1.3" height="1.3" fill="#1a1a1a"/><rect x="1214.4" y="983.8" width="1.3" height="1.3" fill="#1a1a1a"/><rect x="1220.5" y="983.3" width="1.3" height="1.3" fill="#1a1a1a"/><rect x="1227.7" y="984.2" width="1.3" height="1.3" fill="#1a1a1a"/><rect x="1198.6" y="989" width="1.3" height="1.3" fill="#1a1a1a"/><rect x="1203.3" y="988.3" width="1.3" height="1.3" fill="#1a1a1a"/><rect x="1210.4" y="989.4" width="1.3" height="1.3" fill="#1a1a1a"/><rect x="1219.2" y="990.1" width="1.3" height="1.3" fill="#1a1a1a"/><rect x="1225.6" y="990.2" width="1.3" height="1.3" fill="#1a1a1a"/><rect x="1230.4" y="990.2" width="1.3" height="1.3" fill="#1a1a1a"/><rect x="1201.8" y="993.1" width="1.3" height="1.3" fill="#1a1a1a"/><rect x="1206.3" y="992.9" width="1.3" height="1.3" fill="#1a1a1a"/><rect x="1215.2" y="993.6" width="1.3" height="1.3" fill="#1a1a1a"/><rect x="1219.8" y="994.8" width="1.3" height="1.3" fill="#1a1a1a"/><rect x="1227.1" y="993.1" width="1.3" height="1.3" fill="#1a1a1a"/><line x1="1175.6" y1="1000.36" x2="1191.2" y2="1000.36" stroke="#444" stroke-width="1.5"/><line x1="1201.2" y1="1000.36" x2="1216.8" y2="1000.36" stroke="#444" stroke-width="1.5"/><line x1="1226.8" y1="1000.36" x2="1242.4" y2="1000.36" stroke="#444" stroke-width="1.5"/><line x1="1188.4" y1="1008.09" x2="1204" y2="1008.09" stroke="#222" stroke-width="1.2"/><line x1="1214" y1="1008.09" x2="1229.6" y2="1008.09" stroke="#222" stroke-width="1.2"/><line x1="1175.6" y1="1015.82" x2="1191.2" y2="1015.82" stroke="#444" stroke-width="1.2"/><line x1="1201.2" y1="1015.82" x2="1216.8" y2="1015.82" stroke="#444" stroke-width="1.2"/><line x1="1226.8" y1="1015.82" x2="1242.4" y2="1015.82" stroke="#444" stroke-width="1.2"/><line x1="1188.4" y1="1023.55" x2="1204" y2="1023.55" stroke="#222" stroke-width="1.5"/><line x1="1214" y1="1023.55" x2="1229.6" y2="1023.55" stroke="#222" stroke-width="1.5"/><line x1="1175.6" y1="1031.28" x2="1191.2" y2="1031.28" stroke="#444" stroke-width="1.2"/><line x1="1201.2" y1="1031.28" x2="1216.8" y2="1031.28" stroke="#444" stroke-width="1.2"/><line x1="1226.8" y1="1031.28" x2="1242.4" y2="1031.28" stroke="#444" stroke-width="1.2"/><line x1="1188.4" y1="1039.01" x2="1204" y2="1039.01" stroke="#222" stroke-width="1.2"/><line x1="1214" y1="1039.01" x2="1229.6" y2="1039.01" stroke="#222" stroke-width="1.2"/><line x1="1175.6" y1="1046.74" x2="1191.2" y2="1046.74" stroke="#444" stroke-width="1.5"/><line x1="1201.2" y1="1046.74" x2="1216.8" y2="1046.74" stroke="#444" stroke-width="1.5"/><line x1="1226.8" y1="1046.74" x2="1242.4" y2="1046.74" stroke="#444" stroke-width="1.5"/><line x1="1188.4" y1="1054.47" x2="1204" y2="1054.47" stroke="#222" stroke-width="1.2"/><line x1="1214" y1="1054.47" x2="1229.6" y2="1054.47" stroke="#222" stroke-width="1.2"/><line x1="1175.6" y1="1062.98" x2="1191.2" y2="1062.98" stroke="#444" stroke-width="1.5"/><line x1="1201.2" y1="1062.98" x2="1216.8" y2="1062.98" stroke="#444" stroke-width="1.5"/><line x1="1226.8" y1="1062.98" x2="1242.4" y2="1062.98" stroke="#444" stroke-width="1.5"/><line x1="1188.4" y1="1070.71" x2="1204" y2="1070.71" stroke="#222" stroke-width="1.2"/><line x1="1214" y1="1070.71" x2="1229.6" y2="1070.71" stroke="#222" stroke-width="1.2"/><line x1="1175.6" y1="1078.44" x2="1191.2" y2="1078.44" stroke="#444" stroke-width="1.2"/><line x1="1201.2" y1="1078.44" x2="1216.8" y2="1078.44" stroke="#444" stroke-width="1.2"/><line x1="1226.8" y1="1078.44" x2="1242.4" y2="1078.44" stroke="#444" stroke-width="1.2"/><rect x="1199.7" y="1088.6" width="1.3" height="1.3" fill="#1a1a1a"/><rect x="1203.4" y="1085.8" width="1.3" height="1.3" fill="#1a1a1a"/><rect x="1212.5" y="1087.9" width="1.3" height="1.3" fill="#1a1a1a"/><rect x="1218.5" y="1086.6" width="1.3" height="1.3" fill="#1a1a1a"/><rect x="1224.9" y="1087.5" width="1.3" height="1.3" fill="#1a1a1a"/><rect x="1231.5" y="1086.1" width="1.3" height="1.3" fill="#1a1a1a"/><rect x="1201" y="1092.1" width="1.3" height="1.3" fill="#1a1a1a"/><rect x="1208.5" y="1094" width="1.3" height="1.3" fill="#1a1a1a"/><rect x="1215.8" y="1092.6" width="1.3" height="1.3" fill="#1a1a1a"/><rect x="1220.8" y="1091.7" width="1.3" height="1.3" fill="#1a1a1a"/><rect x="1226.1" y="1091" width="1.3" height="1.3" fill="#1a1a1a"/><rect x="1198.1" y="1097.2" width="1.3" height="1.3" fill="#1a1a1a"/><rect x="1204.4" y="1099" width="1.3" height="1.3" fill="#1a1a1a"/><rect x="1211.5" y="1098" width="1.3" height="1.3" fill="#1a1a1a"/><rect x="1217.2" y="1096.2" width="1.3" height="1.3" fill="#1a1a1a"/><rect x="1224" y="1096.6" width="1.3" height="1.3" fill="#1a1a1a"/><rect x="1231.2" y="1099.4" width="1.3" height="1.3" fill="#1a1a1a"/><rect x="1201.8" y="1102" width="1.3" height="1.3" fill="#1a1a1a"/><rect x="1209.1" y="1104" width="1.3" height="1.3" fill="#1a1a1a"/><rect x="1215.2" y="1104.4" width="1.3" height="1.3" fill="#1a1a1a"/><rect x="1221.8" y="1104" width="1.3" height="1.3" fill="#1a1a1a"/><rect x="1227.1" y="1104.6" width="1.3" height="1.3" fill="#1a1a1a"/><rect x="1199.7" y="1107.3" width="1.3" height="1.3" fill="#1a1a1a"/><rect x="1205.6" y="1109.1" width="1.3" height="1.3" fill="#1a1a1a"/><rect x="1211.3" y="1108.5" width="1.3" height="1.3" fill="#1a1a1a"/><rect x="1218" y="1109.7" width="1.3" height="1.3" fill="#1a1a1a"/><rect x="1224.6" y="1109.4" width="1.3" height="1.3" fill="#1a1a1a"/><rect x="1230.7" y="1109.6" width="1.3" height="1.3" fill="#1a1a1a"/><rect x="1202.5" y="1113.5" width="1.3" height="1.3" fill="#1a1a1a"/><rect x="1208" y="1115" width="1.3" height="1.3" fill="#1a1a1a"/><rect x="1215.1" y="1113.6" width="1.3" height="1.3" fill="#1a1a1a"/><rect x="1220.1" y="1113.1" width="1.3" height="1.3" fill="#1a1a1a"/><rect x="1228.2" y="1112.6" width="1.3" height="1.3" fill="#1a1a1a"/><rect x="1199.5" y="1118.2" width="1.3" height="1.3" fill="#1a1a1a"/><rect x="1206.1" y="1118.4" width="1.3" height="1.3" fill="#1a1a1a"/><rect x="1212.9" y="1119.6" width="1.3" height="1.3" fill="#1a1a1a"/><rect x="1218" y="1119" width="1.3" height="1.3" fill="#1a1a1a"/><rect x="1225.1" y="1119.2" width="1.3" height="1.3" fill="#1a1a1a"/><rect x="1230.6" y="1118" width="1.3" height="1.3" fill="#1a1a1a"/><rect x="1201.2" y="1125.7" width="1.3" height="1.3" fill="#1a1a1a"/><rect x="1208.2" y="1122.9" width="1.3" height="1.3" fill="#1a1a1a"/><rect x="1215.4" y="1125" width="1.3" height="1.3" fill="#1a1a1a"/><rect x="1222.3" y="1123.3" width="1.3" height="1.3" fill="#1a1a1a"/><rect x="1228.4" y="1122.9" width="1.3" height="1.3" fill="#1a1a1a"/><rect x="1198.7" y="1128.8" width="1.3" height="1.3" fill="#1a1a1a"/><rect x="1203.9" y="1130.8" width="1.3" height="1.3" fill="#1a1a1a"/><rect x="1210.1" y="1129.6" width="1.3" height="1.3" fill="#1a1a1a"/><rect x="1219.1" y="1128.7" width="1.3" height="1.3" fill="#1a1a1a"/><rect x="1223.7" y="1130.8" width="1.3" height="1.3" fill="#1a1a1a"/><rect x="1231" y="1130.3" width="1.3" height="1.3" fill="#1a1a1a"/><rect x="1199.7" y="1134.4" width="1.3" height="1.3" fill="#1a1a1a"/><rect x="1206.8" y="1135.4" width="1.3" height="1.3" fill="#1a1a1a"/><rect x="1213.1" y="1136.3" width="1.3" height="1.3" fill="#1a1a1a"/><rect x="1219.5" y="1135.6" width="1.3" height="1.3" fill="#1a1a1a"/><rect x="1226.1" y="1134.1" width="1.3" height="1.3" fill="#1a1a1a"/><rect x="1199.2" y="1139.1" width="1.3" height="1.3" fill="#1a1a1a"/><rect x="1203.8" y="1140.8" width="1.3" height="1.3" fill="#1a1a1a"/><rect x="1211" y="1138.7" width="1.3" height="1.3" fill="#1a1a1a"/><rect x="1219.6" y="1139" width="1.3" height="1.3" fill="#1a1a1a"/><rect x="1223.1" y="1139.7" width="1.3" height="1.3" fill="#1a1a1a"/><rect x="1231.6" y="1140.9" width="1.3" height="1.3" fill="#1a1a1a"/><rect x="1200" y="1144.9" width="1.3" height="1.3" fill="#1a1a1a"/><rect x="1206.3" y="1145.3" width="1.3" height="1.3" fill="#1a1a1a"/><rect x="1215.3" y="1146.2" width="1.3" height="1.3" fill="#1a1a1a"/><rect x="1222.3" y="1146.3" width="1.3" height="1.3" fill="#1a1a1a"/><rect x="1228.8" y="1146.1" width="1.3" height="1.3" fill="#1a1a1a"/><rect x="1198.1" y="1149.9" width="1.3" height="1.3" fill="#1a1a1a"/><rect x="1205.3" y="1150.2" width="1.3" height="1.3" fill="#1a1a1a"/><rect x="1210.1" y="1150.6" width="1.3" height="1.3" fill="#1a1a1a"/><rect x="1219.2" y="1149.6" width="1.3" height="1.3" fill="#1a1a1a"/><rect x="1224.9" y="1150.4" width="1.3" height="1.3" fill="#1a1a1a"/><rect x="1231.2" y="1149.6" width="1.3" height="1.3" fill="#1a1a1a"/><rect x="1202.7" y="1155.3" width="1.3" height="1.3" fill="#1a1a1a"/><rect x="1208.1" y="1155.8" width="1.3" height="1.3" fill="#1a1a1a"/><rect x="1212.9" y="1156.2" width="1.3" height="1.3" fill="#1a1a1a"/><rect x="1219.8" y="1154.6" width="1.3" height="1.3" fill="#1a1a1a"/><rect x="1226.1" y="1155" width="1.3" height="1.3" fill="#1a1a1a"/><rect x="1196.9" y="1161.8" width="1.3" height="1.3" fill="#1a1a1a"/><rect x="1204.8" y="1162.9" width="1.3" height="1.3" fill="#1a1a1a"/><rect x="1212.8" y="1162.9" width="1.3" height="1.3" fill="#1a1a1a"/><rect x="1217.1" y="1161.2" width="1.3" height="1.3" fill="#1a1a1a"/><rect x="1223.8" y="1161.7" width="1.3" height="1.3" fill="#1a1a1a"/><rect x="1231.6" y="1162.3" width="1.3" height="1.3" fill="#1a1a1a"/><line x1="1201" y1="1170.7" x2="1204.5" y2="1174.2" stroke="#111" stroke-width="1"/><line x1="1206.5" y1="1167.2" x2="1208" y2="1172.2" stroke="#111" stroke-width="1"/><line x1="1212" y1="1166.7" x2="1212" y2="1172.2" stroke="#111" stroke-width="1"/><line x1="1217.5" y1="1167.2" x2="1216" y2="1172.2" stroke="#111" stroke-width="1"/><line x1="1222.5" y1="1170.7" x2="1219.5" y2="1174.2" stroke="#111" stroke-width="1"/><line x1="1228" y1="1171.2" x2="1231.5" y2="1175.2" stroke="#111" stroke-width="1"/><line x1="1200.5" y1="1166.7" x2="1202" y2="1167.7" stroke="#111" stroke-width="1"/><line x1="1226" y1="1166.7" x2="1224.5" y2="1167.7" stroke="#111" stroke-width="1"/><line x1="1175.6" y1="1179.35" x2="1191.2" y2="1179.35" stroke="#444" stroke-width="1.5"/><line x1="1201.2" y1="1179.35" x2="1216.8" y2="1179.35" stroke="#444" stroke-width="1.5"/><line x1="1226.8" y1="1179.35" x2="1242.4" y2="1179.35" stroke="#444" stroke-width="1.5"/><line x1="1188.4" y1="1187.08" x2="1204" y2="1187.08" stroke="#222" stroke-width="1.2"/><line x1="1214" y1="1187.08" x2="1229.6" y2="1187.08" stroke="#222" stroke-width="1.2"/><line x1="1175.6" y1="1194.81" x2="1191.2" y2="1194.81" stroke="#444" stroke-width="1.2"/><line x1="1201.2" y1="1194.81" x2="1216.8" y2="1194.81" stroke="#444" stroke-width="1.2"/><line x1="1226.8" y1="1194.81" x2="1242.4" y2="1194.81" stroke="#444" stroke-width="1.2"/><line x1="1188.4" y1="1202.54" x2="1204" y2="1202.54" stroke="#222" stroke-width="1.5"/><line x1="1214" y1="1202.54" x2="1229.6" y2="1202.54" stroke="#222" stroke-width="1.5"/><line x1="1175.6" y1="1210.27" x2="1191.2" y2="1210.27" stroke="#444" stroke-width="1.2"/><line x1="1201.2" y1="1210.27" x2="1216.8" y2="1210.27" stroke="#444" stroke-width="1.2"/><line x1="1226.8" y1="1210.27" x2="1242.4" y2="1210.27" stroke="#444" stroke-width="1.2"/><line x1="1188.4" y1="1218" x2="1204" y2="1218" stroke="#222" stroke-width="1.2"/><line x1="1214" y1="1218" x2="1229.6" y2="1218" stroke="#222" stroke-width="1.2"/><line x1="1175.6" y1="1225.73" x2="1191.2" y2="1225.73" stroke="#444" stroke-width="1.5"/><line x1="1201.2" y1="1225.73" x2="1216.8" y2="1225.73" stroke="#444" stroke-width="1.5"/><line x1="1226.8" y1="1225.73" x2="1242.4" y2="1225.73" stroke="#444" stroke-width="1.5"/><line x1="1201.6" y1="1233.82" x2="1207" y2="1238.4" stroke="#111" stroke-width="1.25"/><line x1="1201.6" y1="1238.4" x2="1207" y2="1233.82" stroke="#111" stroke-width="1.25"/><line x1="1216.8" y1="1233.82" x2="1222.2" y2="1238.4" stroke="#111" stroke-width="1.25"/><line x1="1216.8" y1="1238.4" x2="1222.2" y2="1233.82" stroke="#111" stroke-width="1.25"/></g>
<line x1="1196.2" y1="841.33" x2="1232.4" y2="841.33" stroke="#111" stroke-width="1.3"/>
<line x1="1196.2" y1="933.64" x2="1232.4" y2="933.64" stroke="#111" stroke-width="1.5"/>
<line x1="1196.2" y1="996.26" x2="1232.4" y2="996.26" stroke="#111" stroke-width="1.3"/>
<line x1="1196.2" y1="1058.88" x2="1232.4" y2="1058.88" stroke="#111" stroke-width="1.5"/>
<line x1="1196.2" y1="1084.66" x2="1232.4" y2="1084.66" stroke="#111" stroke-width="1.5"/>
<line x1="1196.2" y1="1165.7" x2="1232.4" y2="1165.7" stroke="#111" stroke-width="1.3"/>
<line x1="1196.2" y1="1232.52" x2="1232.4" y2="1232.52" stroke="#111" stroke-width="1.5"/>
<line x1="1196.2" y1="1176.75" x2="1232.4" y2="1176.75" stroke="#111" stroke-width="2"/>
<line x1="1232.4" y1="841.33" x2="1273" y2="841.33" stroke="#111" stroke-width="1.2"/>
<line x1="1232.4" y1="933.64" x2="1273" y2="933.64" stroke="#111" stroke-width="1.2"/>
<line x1="1232.4" y1="996.26" x2="1273" y2="996.26" stroke="#111" stroke-width="1.2"/>
<line x1="1232.4" y1="1058.88" x2="1273" y2="1058.88" stroke="#111" stroke-width="1.2"/>
<line x1="1232.4" y1="1084.66" x2="1273" y2="1084.66" stroke="#111" stroke-width="1.2"/>
<line x1="1232.4" y1="1165.7" x2="1273" y2="1165.7" stroke="#111" stroke-width="1.2"/>
<line x1="1232.4" y1="1232.52" x2="1273" y2="1232.52" stroke="#111" stroke-width="1.2"/>
<polyline points="1232.4,1176.75 1237,1184.2 1269.2,1184.2 1273,1176.75" fill="none" stroke="#111" stroke-width="1.2"/>
<polyline points="1273,841.33 1276.6,848 1523.5,848 1527.5,843.5" fill="none" stroke="#333" stroke-width="1.3" stroke-dasharray="1.2 3.9"/>
<polyline points="1273,933.64 1275.5,942.5 1527,942.5 1529,936" fill="none" stroke="#333" stroke-width="1.3" stroke-dasharray="1.2 3.9"/>
<line x1="1273" y1="996.26" x2="1530.6" y2="996.26" stroke="#111" stroke-width="1.2" stroke-dasharray="10.4 5.4"/>
<line x1="1277" y1="1058.88" x2="1530.6" y2="1058.88" stroke="#333" stroke-width="1.3" stroke-dasharray="1.2 3.9"/>
<line x1="1273" y1="1084.66" x2="1279.5" y2="1089.9" stroke="#111" stroke-width="1.2"/>
<line x1="1279.5" y1="1089.9" x2="1525.7" y2="1089.9" stroke="#111" stroke-width="1.2" stroke-dasharray="10.4 5.4"/>
<line x1="1525.7" y1="1089.9" x2="1530.6" y2="1084.66" stroke="#111" stroke-width="1.2"/>
<line x1="1277" y1="1165.3" x2="1530.6" y2="1165.3" stroke="#333" stroke-width="1.3" stroke-dasharray="1.2 3.9"/>
<line x1="1273" y1="1176.75" x2="1277.5" y2="1197.2" stroke="#111" stroke-width="1.2"/>
<line x1="1277.5" y1="1197.2" x2="1526" y2="1197.2" stroke="#111" stroke-width="1.2" stroke-dasharray="10.4 5.4"/>
<line x1="1526" y1="1197.2" x2="1530.6" y2="1176.75" stroke="#111" stroke-width="1.2" stroke-dasharray="6 3"/>
<polyline points="1273,1232.52 1278.5,1254.7 1525,1254.7 1530.6,1232.52" fill="none" stroke="#111" stroke-width="1.2"/>
<polyline points="1273,1239.6 1278.5,1273.2 1525,1273.2 1530.6,1239.6" fill="none" stroke="#111" stroke-width="1.2"/>
<line x1="1530.6" y1="933.6" x2="1592" y2="933.6" stroke="#111" stroke-width="1.3"/>
<line x1="1530.6" y1="1176.6" x2="1592" y2="1176.6" stroke="#111" stroke-width="1.3"/>
<line x1="1561.4" y1="1059.1" x2="1592" y2="1059.1" stroke="#111" stroke-width="1.3"/>
<line x1="1561.4" y1="1084.3" x2="1592" y2="1084.3" stroke="#111" stroke-width="1.3"/>
<path d="M1547.5 1011.6 q2 -1.3 4 0 t4 0 M1547.5 1014.6 q2 -1.3 4 0 t4 0" stroke="#111" stroke-width="1.5" fill="none"/>
<line x1="1596.1" y1="776" x2="1601.9" y2="781.8" stroke="#000" stroke-width="2.3"/>
<line x1="1596.1" y1="781.8" x2="1601.9" y2="776" stroke="#000" stroke-width="2.3"/>
<line x1="1596.6" y1="778.9" x2="1601.4" y2="778.9" stroke="#000" stroke-width="1.6"/>
<line x1="1602.2" y1="864.7" x2="1607.4" y2="869.9" stroke="#000" stroke-width="1.7"/>
<line x1="1602.2" y1="869.9" x2="1607.4" y2="864.7" stroke="#000" stroke-width="1.7"/>
<line x1="1615.2" y1="864.7" x2="1620.4" y2="869.9" stroke="#000" stroke-width="1.7"/>
<line x1="1615.2" y1="869.9" x2="1620.4" y2="864.7" stroke="#000" stroke-width="1.7"/>
<line x1="1669" y1="841.3" x2="1870" y2="841.3" stroke="#333" stroke-width="1.3" stroke-dasharray="1.2 4.6"/>
<line x1="1669" y1="1176.9" x2="1870" y2="1176.9" stroke="#222" stroke-width="1.2" stroke-dasharray="10.5 4"/>
<line x1="1669" y1="1232.52" x2="1870" y2="1232.52" stroke="#111" stroke-width="1.2"/>
<polyline points="1669,1239.6 1674,1246.2 1865.5,1246.2 1870,1239.1" fill="none" stroke="#111" stroke-width="1.2"/>
<defs><clipPath id="hc3"><polygon points="1067.1,1612.4 1077.53,1612.4 1077.53,1625.38 1087.96,1625.38 1087.96,1638.36 1098.39,1638.36 1098.39,1651.34 1108.82,1651.34 1108.82,1664.32 1067.1,1664.32"/></clipPath></defs>
<path clip-path="url(#hc3)" d="M1066.1 1600.54L1109.82 1556.82M1066.1 1607.06L1109.82 1563.34M1066.1 1613.58L1109.82 1569.86M1066.1 1620.1L1109.82 1576.38M1066.1 1626.62L1109.82 1582.9M1066.1 1633.14L1109.82 1589.42M1066.1 1639.66L1109.82 1595.94M1066.1 1646.18L1109.82 1602.46M1066.1 1652.7L1109.82 1608.98M1066.1 1659.22L1109.82 1615.5M1066.1 1665.74L1109.82 1622.02M1066.1 1672.26L1109.82 1628.54M1066.1 1678.78L1109.82 1635.06M1066.1 1685.3L1109.82 1641.58M1066.1 1691.82L1109.82 1648.1M1066.1 1698.34L1109.82 1654.62M1066.1 1704.86L1109.82 1661.14M1066.1 1711.38L1109.82 1667.66M1066.1 1717.9L1109.82 1674.18" stroke="#111" stroke-width="1.2" fill="none"/>
<polygon points="1067.1,1612.4 1077.53,1612.4 1077.53,1625.38 1087.96,1625.38 1087.96,1638.36 1098.39,1638.36 1098.39,1651.34 1108.82,1651.34 1108.82,1664.32 1067.1,1664.32" fill="none" stroke="#2a2a2a" stroke-width="1.05"/>
<polygon points="1193.1,1609.9 1209.4,1609.9 1201.2,1617.9" fill="none" stroke="#111" stroke-width="1.1"/>
<line x1="1193.1" y1="1617.9" x2="1209.4" y2="1617.9" stroke="#111" stroke-width="1.1"/>
<line x1="1196.5" y1="1621.9" x2="1206" y2="1621.9" stroke="#111" stroke-width="1.1"/>
<polygon points="1193.1,1629.4 1209.4,1633.6 1193.1,1637.8" fill="none" stroke="#111" stroke-width="1.1"/>
<polygon points="1209.4,1644.9 1193.1,1649.1 1209.4,1653.3" fill="none" stroke="#111" stroke-width="1.1"/>
<polygon points="1209.4,1660.6 1193.1,1664.8 1209.4,1669" fill="#111" stroke="#111" stroke-width="1.1"/>
<defs><pattern id="dt" width="3.5" height="3.5" patternUnits="userSpaceOnUse"><rect x="1.2" y="1.2" width="1.1" height="1.1" fill="#333"/></pattern></defs>
<rect x="1087.9" y="1695.2" width="20.9" height="20.3" fill="url(#dt)" stroke="none" stroke-width="1"/>
<rect x="1087.9" y="1725.9" width="20.9" height="5.5" fill="url(#dt)" stroke="none" stroke-width="1"/>
<rect x="1087.9" y="1695.2" width="20.9" height="36.2" fill="none" stroke="#222" stroke-width="1.1"/>
<line x1="1087.9" y1="1715.5" x2="1108.8" y2="1715.5" stroke="#222" stroke-width="1.1"/>
<line x1="1087.9" y1="1725.9" x2="1108.8" y2="1725.9" stroke="#222" stroke-width="1.1"/>
<polyline points="1112.5,1695.5 1117,1695.5 1117,1714.5 1112.5,1714.5" fill="none" stroke="#111" stroke-width="1.1"/>
<line x1="1117" y1="1705" x2="1124" y2="1705" stroke="#111" stroke-width="1.1"/>
<polyline points="1112.5,1716 1117,1716 1117,1726.2 1112.5,1726.2" fill="none" stroke="#111" stroke-width="1.1"/>
<line x1="1117" y1="1726.2" x2="1124" y2="1726.2" stroke="#111" stroke-width="1.1"/></svg>
<div class="a" style="left:956px;top:391px;"><span class="l f0" style="font-weight:bold;color:#1a1a1a;letter-spacing:-1.15px;">Datgel</span></div>
<div class="a" style="left:907.71px;top:407px;"><span class="l f1" style="font-weight:bold;color:#3f8f2f;letter-spacing:-0.25px;">DATA SOLUTIONS</span></div>
<div class="a" style="left:907.59px;top:418px;"><span class="l f2" style="color:#222;letter-spacing:-0.05px;">Geotechnics • Geoenvironment • Laboratory</span></div>
<div class="a" style="left:1800.4px;top:363px;"><span class="c f3">Borehole No.</span></div>
<div class="a" style="left:1800.4px;top:402px;"><span class="c f4" style="font-weight:bold;">BH 2</span></div>
<div class="a" style="left:1800.4px;top:435px;"><span class="c f3">Page  1  of  2</span></div>
<div class="a" style="left:907.75px;top:469px;"><span class="l f5" style="font-weight:bold;">Engineering Log - Borehole</span></div>
<div class="a" style="left:1472.95px;top:466px;"><span class="l f3">Project No.:</span></div>
<div class="a" style="left:1602.22px;top:466px;"><span class="l f3">5.00.6</span></div>
<div class="a" style="left:923.48px;top:502px;"><span class="l f3">Client:</span></div>
<div class="a" style="left:1051.55px;top:502px;"><span class="l f3">Datgel</span></div>
<div class="a" style="left:1473.38px;top:502px;"><span class="l f3">Commenced:</span></div>
<div class="a" style="left:1602.08px;top:502px;"><span class="l f3">25/7/2006</span></div>
<div class="a" style="left:923.05px;top:522px;"><span class="l f3">Project Name:</span></div>
<div class="a" style="left:1051.98px;top:522px;"><span class="l f3">Construction Project</span></div>
<div class="a" style="left:1473.38px;top:522px;"><span class="l f3">Completed:</span></div>
<div class="a" style="left:1602.08px;top:522px;"><span class="l f3">25/7/2006</span></div>
<div class="a" style="left:923.05px;top:543px;"><span class="l f3">Hole Location:</span></div>
<div class="a" style="left:1052.05px;top:543px;"><span class="l f3">Somewhere, World</span></div>
<div class="a" style="left:1472.95px;top:543px;"><span class="l f3">Logged By:</span></div>
<div class="a" style="left:1601.65px;top:543px;"><span class="l f3">LB</span></div>
<div class="a" style="left:923.05px;top:563px;"><span class="l f3">Hole Position:</span></div>
<div class="a" style="left:1051.98px;top:563px;"><span class="l f3">Cut 123 262740.3 m E 6265983.9 m N MGA94 Zone 56</span></div>
<div class="a" style="left:1473.38px;top:563px;"><span class="l f3">Checked By:</span></div>
<div class="a" style="left:1602.08px;top:563px;"><span class="l f3">CB</span></div>
<div class="a" style="left:923.05px;top:592px;"><span class="l f3">Drill Model and Mounting:</span></div>
<div class="a" style="left:1102.65px;top:592px;"><span class="l f3">DB515</span></div>
<div class="a" style="left:1308.6px;top:592px;"><span class="l f3">Inclination:</span></div>
<div class="a" style="left:1401.42px;top:592px;"><span class="l f3">-90°</span></div>
<div class="a" style="left:1472.95px;top:592px;"><span class="l f3">RL Surface:</span></div>
<div class="a" style="left:1575.78px;top:592px;"><span class="l f3">25.55 m</span></div>
<div class="a" style="left:923.05px;top:612px;"><span class="l f3">Hole Diameter:</span></div>
<div class="a" style="left:1103.22px;top:612px;"><span class="l f3">85 - 90 mm</span></div>
<div class="a" style="left:1308.75px;top:612px;"><span class="l f3">Bearing:</span></div>
<div class="a" style="left:1472.95px;top:612px;"><span class="l f3">Datum:</span></div>
<div class="a" style="left:1576.5px;top:612px;"><span class="l f3">AHD</span></div>
<div class="a" style="left:1653.35px;top:612px;"><span class="l f3">Operator:</span></div>
<div class="a" style="left:1730.35px;top:612px;"><span class="l f3">OB</span></div>
<div class="a" style="left:1052.2px;top:646px;"><span class="c f6" style="font-weight:bold;font-style:italic;">Drilling Information</span></div>
<div class="a" style="left:1436px;top:646px;"><span class="c f6" style="font-weight:bold;font-style:italic;">Soil Description</span></div>
<div class="a" style="left:1769.5px;top:646px;"><span class="c f6" style="font-weight:bold;font-style:italic;">Observations</span></div>
<div class="a" style="left:923px;top:754px;transform:rotate(-90deg);"><span class="l f7">Method</span></div>
<div class="a" style="left:954px;top:748.5px;transform:rotate(-90deg);"><span class="l f7">Penetration</span></div>
<div class="a" style="left:985px;top:754px;transform:rotate(-90deg);"><span class="l f7">Support</span></div>
<div class="a" style="left:1007px;top:754px;transform:rotate(-90deg);"><span class="l f7">Water</span></div>
<div class="a" style="left:1062.4px;top:702px;"><span class="c f7">Samples</span></div>
<div class="a" style="left:1062.4px;top:717px;"><span class="c f7">Tests</span></div>
<div class="a" style="left:1062.4px;top:732px;"><span class="c f7">Remarks</span></div>
<div class="a" style="left:1121px;top:754px;transform:rotate(-90deg);"><span class="l f7">Recovery</span></div>
<div class="a" style="left:1141.8px;top:738px;"><span class="c f7">RL</span></div>
<div class="a" style="left:1141.8px;top:750px;"><span class="c f7">(m)</span></div>
<div class="a" style="left:1177.6px;top:739px;"><span class="c f7">Depth</span></div>
<div class="a" style="left:1177.6px;top:750px;"><span class="c f7">(m)</span></div>
<div class="a" style="left:1219px;top:754px;transform:rotate(-90deg);"><span class="l f7">Graphic Log</span></div>
<div class="a" style="left:1251px;top:754px;transform:rotate(-90deg);"><span class="l f7">Group</span></div>
<div class="a" style="left:1264px;top:754px;transform:rotate(-90deg);"><span class="l f7">Symbol</span></div>
<div class="a" style="left:1401.8px;top:704px;"><span class="c f7">Material Description</span></div>
<div class="a" style="left:1401.8px;top:717px;"><span class="c f7">Fraction, Colour, Structure, Bedding,</span></div>
<div class="a" style="left:1401.8px;top:730px;"><span class="c f7">Plasticity, Sensitivity, Additional</span></div>
<div class="a" style="left:1544px;top:753.8px;transform:rotate(-90deg);"><span class="l f7">Moisture</span></div>
<div class="a" style="left:1556px;top:753.8px;transform:rotate(-90deg);"><span class="l f7">Condition</span></div>
<div class="a" style="left:1574px;top:753.8px;transform:rotate(-90deg);"><span class="l f7">Consistency</span></div>
<div class="a" style="left:1588px;top:753.8px;transform:rotate(-90deg);"><span class="l f7">Relative Density</span></div>
<div class="a" style="left:1630.8px;top:697px;"><span class="c f7">Pocket</span></div>
<div class="a" style="left:1630.8px;top:710px;"><span class="c f7">Penetrometer</span></div>
<div class="a" style="left:1630.8px;top:723px;"><span class="c f7">UCS</span></div>
<div class="a" style="left:1630.8px;top:736px;"><span class="c f7">(kPa)</span></div>
<div class="a" style="left:1608px;top:762.4px;transform:rotate(-90deg);"><span class="l f8">100</span></div>
<div class="a" style="left:1621px;top:762.4px;transform:rotate(-90deg);"><span class="l f8">200</span></div>
<div class="a" style="left:1634px;top:762.4px;transform:rotate(-90deg);"><span class="l f8">300</span></div>
<div class="a" style="left:1647px;top:762.4px;transform:rotate(-90deg);"><span class="l f8">400</span></div>
<div class="a" style="left:1660px;top:762.4px;transform:rotate(-90deg);"><span class="l f8">500</span></div>
<div class="a" style="left:1777px;top:710px;"><span class="c f7">Structure and</span></div>
<div class="a" style="left:1777px;top:724px;"><span class="c f7">Additional Observations</span></div>
<div class="a" style="left:922px;top:806px;transform:rotate(-90deg);"><span class="c f7">AD/T</span></div>
<div class="a" style="left:922px;top:1038.5px;transform:rotate(-90deg);"><span class="c f7">RR</span></div>
<div class="a" style="left:984px;top:1040px;transform:rotate(-90deg);"><span class="c f7">T</span></div>
<div class="a" style="left:1007px;top:904.5px;transform:rotate(-90deg);"><span class="c f9">26/07/06</span></div>
<div class="a" style="left:1007px;top:960.4px;transform:rotate(-90deg);"><span class="c f9">25/07/06</span></div>
<div class="a" style="left:1007px;top:1094px;transform:rotate(-90deg);"><span class="l f10">95% Polymer RETURN</span></div>
<div class="a" style="left:1018.24px;top:790px;"><span class="l f7" style="letter-spacing:0.02px;">PP 0.20 m =50 -</span></div>
<div class="a" style="left:1018.6px;top:803px;"><span class="l f7">60 kPa</span></div>
<div class="a" style="left:1018.6px;top:875px;"><span class="l f7">2</span></div>
<div class="a" style="left:1018.66px;top:888px;"><span class="l f7">SPT</span></div>
<div class="a" style="left:1018.3px;top:901px;"><span class="l f7">1.35-1.55 m</span></div>
<div class="a" style="left:1018.96px;top:914px;"><span class="l f7">40/4mm,6</span></div>
<div class="a" style="left:1018.72px;top:927px;"><span class="l f7">50mm,5</span></div>
<div class="a" style="left:1018.24px;top:940px;"><span class="l f7">N=11/200mm</span></div>
<div class="a" style="left:1018.24px;top:953px;"><span class="l f7">PID 1.35 m</span></div>
<div class="a" style="left:1018.3px;top:966px;"><span class="l f7">100 ppm</span></div>
<div class="a" style="left:1018.24px;top:980px;"><span class="l f7">PP</span></div>
<div class="a" style="left:1018.66px;top:993px;"><span class="l f7">=100-200 kPa</span></div>
<div class="a" style="left:1018.48px;top:1006px;"><span class="l f7">HV s<span style="font-size:7px;position:relative;top:2.5px">v</span>&gt;2 kPa</span></div>
<div class="a" style="left:1018.48px;top:1019px;"><span class="l f7">s<span style="font-size:7px;position:relative;top:2.5px">r</span>&lt;2 kPa</span></div>
<div class="a" style="left:1018.24px;top:1032px;"><span class="l f7">PID 1.70 m</span></div>
<div class="a" style="left:1018.72px;top:1045px;"><span class="l f7">50 ppm</span></div>
<div class="a" style="left:1018.6px;top:1058px;"><span class="l f7">2</span></div>
<div class="a" style="left:1018.66px;top:1071px;"><span class="l f7">SPT</span></div>
<div class="a" style="left:1018.6px;top:1084px;"><span class="l f7">2.00-2.45 m</span></div>
<div class="a" style="left:1018.3px;top:1097px;"><span class="l f7">1,2,3</span></div>
<div class="a" style="left:1018.24px;top:1110px;"><span class="l f7">N=5</span></div>
<div class="a" style="left:1018.78px;top:1124px;"><span class="l f7">3</span></div>
<div class="a" style="left:1018.66px;top:1137px;"><span class="l f7">SPT</span></div>
<div class="a" style="left:1018.6px;top:1150px;"><span class="l f7">2.85-3.30 m</span></div>
<div class="a" style="left:1018.78px;top:1163px;"><span class="l f7">0,1,3</span></div>
<div class="a" style="left:1018.24px;top:1176px;"><span class="l f7">N=4</span></div>
<div class="a" style="left:1018.6px;top:1189px;"><span class="l f7">2 U63</span></div>
<div class="a" style="left:1018.96px;top:1202px;"><span class="l f7">4.20-4.65 m</span></div>
<div class="a" style="left:1018.96px;top:1215px;"><span class="l f7">4</span></div>
<div class="a" style="left:1018.66px;top:1228px;"><span class="l f7">SPT</span></div>
<div class="a" style="left:1018.72px;top:1242px;"><span class="l f7">5.70-6.02 m</span></div>
<div class="a" style="left:1018.78px;top:1255px;"><span class="l f7">3,3,30/20mm</span></div>
<div class="a" style="left:1018.24px;top:1268px;"><span class="l f7">N=33/170mm</span></div>
<div class="a" style="left:1147px;top:911.54px;transform:rotate(-90deg);"><span class="c f7">23.6</span></div>
<div class="a" style="left:1183.3px;top:916px;"><span class="r f7">2</span></div>
<div class="a" style="left:1147px;top:1058.88px;transform:rotate(-90deg);"><span class="c f7">21.6</span></div>
<div class="a" style="left:1183.3px;top:1063px;"><span class="r f7">4</span></div>
<div class="a" style="left:1147px;top:1206.22px;transform:rotate(-90deg);"><span class="c f7">19.6</span></div>
<div class="a" style="left:1183.3px;top:1210px;"><span class="r f7">6</span></div>
<div class="a" style="left:1147px;top:1353.56px;transform:rotate(-90deg);"><span class="c f7">17.6</span></div>
<div class="a" style="left:1183.3px;top:1358px;"><span class="r f7">8</span></div>
<div class="a" style="left:1147px;top:1500.9px;transform:rotate(-90deg);"><span class="c f7">15.6</span></div>
<div class="a" style="left:1183.3px;top:1505px;"><span class="r f7">10</span></div>
<div class="a" style="left:1252.7px;top:778px;"><span class="c f7">CL</span></div>
<div class="a" style="left:1252.7px;top:791px;"><span class="c f7">/SP</span></div>
<div class="a" style="left:1252.7px;top:856px;"><span class="c f7">CI</span></div>
<div class="a" style="left:1252.7px;top:948px;"><span class="c f7">SC-SM</span></div>
<div class="a" style="left:1252.7px;top:1010px;"><span class="c f7">CL</span></div>
<div class="a" style="left:1252.7px;top:1072px;"><span class="c f7">CL</span></div>
<div class="a" style="left:1252.7px;top:1099px;"><span class="c f7">SC-SM</span></div>
<div class="a" style="left:1252.7px;top:1180px;"><span class="c f7">OL</span></div>
<div class="a" style="left:1252.7px;top:1198px;"><span class="c f7">CI-CH</span></div>
<div class="a" style="left:1277.54px;top:778px;"><span class="l f7">FILL INTERBEDDED Sandy Gravelly CLAY</span></div>
<div class="a" style="left:1278.5px;top:791px;"><span class="l f7">AND CALCAREOUS SAND: clay is low</span></div>
<div class="a" style="left:1277.78px;top:804px;"><span class="l f7">plasticity, brown; gravel fine to coarse angular;</span></div>
<div class="a" style="left:1278.2px;top:817px;"><span class="l f7">sand fine to coarse grained; scatter of</span></div>
<div class="a" style="left:1278.02px;top:830px;"><span class="l f7">cobbles; sand is fine to medium grained,</span></div>
<div class="a" style="left:1277.78px;top:843px;"><span class="l f7">uniform, angular, dark brown blue.</span></div>
<div class="a" style="left:1277.96px;top:862px;"><span class="l f7">Silty CLAY: medium plasticity, green, brown</span></div>
<div class="a" style="left:1278.02px;top:875px;"><span class="l f7">and pale brown; scatter of fine to coarse</span></div>
<div class="a" style="left:1278.02px;top:888px;"><span class="l f7">grained sand.</span></div>
<div class="a" style="left:1525px;top:924px;"><span class="r f7">AS ABOVE.  sand content increasing with</span></div>
<div class="a" style="left:1526.5px;top:938px;"><span class="r f7">depth.</span></div>
<div class="a" style="left:1277.9px;top:957px;"><span class="l f7">Clayey SAND: fine and medium grained,</span></div>
<div class="a" style="left:1277.78px;top:970px;"><span class="l f7">brown and pale brown with some grey; Slight</span></div>
<div class="a" style="left:1278.02px;top:982px;"><span class="l f7">and low plasticity.</span></div>
<div class="a" style="left:1277.9px;top:1010px;"><span class="l f7">Clayey SAND: pale brown and grey with some</span></div>
<div class="a" style="left:1277.72px;top:1023px;"><span class="l f7">red-brown; with some low plasticity sandy clay</span></div>
<div class="a" style="left:1277.72px;top:1036px;"><span class="l f7">layers.</span></div>
<div class="a" style="left:1277.96px;top:1073px;"><span class="l f7">Sandy CLAY: low plasticity, pale grey; sand</span></div>
<div class="a" style="left:1278.38px;top:1086px;"><span class="l f7">fine and medium grained.</span></div>
<div class="a" style="left:1277.9px;top:1103px;"><span class="l f7">Clayey SAND: fine to coarse grained, low</span></div>
<div class="a" style="left:1277.78px;top:1116px;"><span class="l f7">plasticity, pale grey pale brown and pale</span></div>
<div class="a" style="left:1277.72px;top:1130px;"><span class="l f7">red-brown; Non and low plasticity layers;</span></div>
<div class="a" style="left:1278.5px;top:1143px;"><span class="l f7">variable fine to coarse grained sand; Scatter</span></div>
<div class="a" style="left:1278.02px;top:1156px;"><span class="l f7">of gravel.</span></div>
<div class="a" style="left:1277.96px;top:1179px;"><span class="l f7">Silty CLAY: medium plasticity, dark grey;</span></div>
<div class="a" style="left:1278.02px;top:1192px;"><span class="l f7">organic.</span></div>
<div class="a" style="left:1277.96px;top:1210px;"><span class="l f7">Sandy Silty CLAY: medium to high plasticity,</span></div>
<div class="a" style="left:1278.02px;top:1224px;"><span class="l f7">dark brown and dark grey; sand fine to coarse</span></div>
<div class="a" style="left:1278.02px;top:1237px;"><span class="l f7">grained; Some organic material; scatter of</span></div>
<div class="a" style="left:1278.02px;top:1250px;"><span class="l f7">gravel.</span></div>
<div class="a" style="left:1277.96px;top:1268px;"><span class="l f7">SANDY SILTSTONE META: dark grey.</span></div>
<div class="a" style="left:1277.9px;top:1287px;"><span class="l f7">Continued on cored borehole sheet</span></div>
<div class="a" style="left:1550px;top:848.5px;transform:rotate(-90deg);"><span class="c f7">M becoming D</span></div>
<div class="a" style="left:1542px;top:1018px;"><span class="c f7">w</span></div>
<div class="a" style="left:1546px;top:1032px;"><span class="c f7">PL or</span></div>
<div class="a" style="left:1546px;top:1046px;"><span class="c f7">w &lt;</span></div>
<div class="a" style="left:1546px;top:1060px;"><span class="c f7">PL</span></div>
<div class="a" style="left:1546px;top:1213px;"><span class="c f7">D</span></div>
<div class="a" style="left:1576.7px;top:852px;"><span class="c f7">H</span></div>
<div class="a" style="left:1576.7px;top:1000px;"><span class="c f7">VL</span></div>
<div class="a" style="left:1576.7px;top:1075px;"><span class="c f7">S</span></div>
<div class="a" style="left:1576.7px;top:1134px;"><span class="c f7">MD</span></div>
<div class="a" style="left:1576.7px;top:1205px;"><span class="c f7">S</span></div>
<div class="a" style="left:1576.7px;top:1219px;"><span class="c f7">and F</span></div>
<div class="a" style="left:1673.96px;top:774px;"><span class="l f11">FILL</span></div>
<div class="a" style="left:1674.43px;top:811px;"><span class="l f11">0.50: large shell</span></div>
<div class="a" style="left:1674.8px;top:852px;"><span class="l f11">ALLUVIAL SOIL</span></div>
<div class="a" style="left:1673.96px;top:1187px;"><span class="l f11">RESIDUAL SOIL becoming ROCK</span></div>
<div class="a" style="left:1673.96px;top:1242px;"><span class="l f11">ROCK</span></div>
<div class="a" style="left:977.8px;top:1602px;"><span class="c f12" style="font-weight:bold;font-style:italic;text-decoration:underline;">Method</span></div>
<div class="a" style="left:1109px;top:1602px;"><span class="c f12" style="font-weight:bold;font-style:italic;text-decoration:underline;">Penetration</span></div>
<div class="a" style="left:1242.5px;top:1602px;"><span class="c f12" style="font-weight:bold;font-style:italic;text-decoration:underline;">Water</span></div>
<div class="a" style="left:1425px;top:1602px;"><span class="c f12" style="font-weight:bold;font-style:italic;text-decoration:underline;">Samples and Tests</span></div>
<div class="a" style="left:1607.6px;top:1602px;"><span class="c f12" style="font-weight:bold;font-style:italic;text-decoration:underline;">Moisture Condition</span></div>
<div class="a" style="left:1774.9px;top:1602px;"><span class="c f12" style="font-weight:bold;font-style:italic;text-decoration:underline;">Consistency/Relative Density</span></div>
<div class="a" style="left:923.7px;top:1617px;"><span class="l f7">AS -</span></div>
<div class="a" style="left:954.4px;top:1617px;"><span class="l f7">Auger Screwing</span></div>
<div class="a" style="left:922.74px;top:1629px;"><span class="l f7">RR -</span></div>
<div class="a" style="left:953.44px;top:1629px;"><span class="l f7">Rock Roller</span></div>
<div class="a" style="left:923.7px;top:1640px;"><span class="l f7">WB-</span></div>
<div class="a" style="left:954.4px;top:1640px;"><span class="l f7">Washbore</span></div>
<div class="a" style="left:977.8px;top:1702px;"><span class="c f12" style="font-weight:bold;font-style:italic;text-decoration:underline;">Support</span></div>
<div class="a" style="left:943.8px;top:1718px;"><span class="l f7">C</span></div>
<div class="a" style="left:964.42px;top:1718px;"><span class="l f7">-</span></div>
<div class="a" style="left:974.7px;top:1718px;"><span class="l f7">Casing</span></div>
<div class="a" style="left:1130px;top:1617px;"><span class="c f7">No resistance</span></div>
<div class="a" style="left:1126.8px;top:1629px;"><span class="c f7">ranging to</span></div>
<div class="a" style="left:1127.6px;top:1640px;"><span class="c f7">refusal</span></div>
<div class="a" style="left:1215.84px;top:1623px;"><span class="l f7">Level (Date)</span></div>
<div class="a" style="left:1215.72px;top:1638px;"><span class="l f7">Inflow</span></div>
<div class="a" style="left:1215.84px;top:1653px;"><span class="l f7">Partial Loss</span></div>
<div class="a" style="left:1216.2px;top:1669px;"><span class="l f7">Complete Loss</span></div>
<div class="a" style="left:1176.2px;top:1688px;"><span class="c f12" style="font-weight:bold;font-style:italic;text-decoration:underline;">Graphic Log/Core Loss</span></div>
<div class="a" style="left:1128.9px;top:1704px;"><span class="l f7">Core recovered (hatching</span></div>
<div class="a" style="left:1128.72px;top:1716px;"><span class="l f7">indicates material)</span></div>
<div class="a" style="left:1128.9px;top:1730px;"><span class="l f7">Core loss</span></div>
<div class="a" style="left:1329px;top:1617px;"><span class="l f7">U</span></div>
<div class="a" style="left:1354.72px;top:1617px;"><span class="l f7">-</span></div>
<div class="a" style="left:1365.1px;top:1617px;"><span class="l f7">Undisturbed Sample</span></div>
<div class="a" style="left:1328.94px;top:1629px;"><span class="l f7">D</span></div>
<div class="a" style="left:1354.72px;top:1629px;"><span class="l f7">-</span></div>
<div class="a" style="left:1365.04px;top:1629px;"><span class="l f7">Disturbed Sample</span></div>
<div class="a" style="left:1329.36px;top:1640px;"><span class="l f7">SPT</span></div>
<div class="a" style="left:1354.72px;top:1640px;"><span class="l f7">-</span></div>
<div class="a" style="left:1365.46px;top:1640px;"><span class="l f7">Standard Penetration Test</span></div>
<div class="a" style="left:1425px;top:1694px;"><span class="c f12" style="font-weight:bold;font-style:italic;text-decoration:underline;">Classification Symbols</span></div>
<div class="a" style="left:1425px;top:1708px;"><span class="c f12" style="font-weight:bold;font-style:italic;text-decoration:underline;">and Soil Descriptions</span></div>
<div class="a" style="left:1425px;top:1725px;"><span class="c f7">Based on Unified Soil</span></div>
<div class="a" style="left:1425px;top:1736px;"><span class="c f7">Classification System</span></div>
<div class="a" style="left:1581.44px;top:1617px;"><span class="l f7">D</span></div>
<div class="a" style="left:1601.82px;top:1617px;"><span class="l f7">-</span></div>
<div class="a" style="left:1612.24px;top:1617px;"><span class="l f7">Dry</span></div>
<div class="a" style="left:1581.44px;top:1629px;"><span class="l f7">M</span></div>
<div class="a" style="left:1601.82px;top:1629px;"><span class="l f7">-</span></div>
<div class="a" style="left:1612.24px;top:1629px;"><span class="l f7">Moist</span></div>
<div class="a" style="left:1582.4px;top:1640px;"><span class="l f7">W</span></div>
<div class="a" style="left:1601.82px;top:1640px;"><span class="l f7">-</span></div>
<div class="a" style="left:1613.2px;top:1640px;"><span class="l f7">Wet</span></div>
<div class="a" style="left:1607.6px;top:1679px;"><span class="c f12" style="font-weight:bold;font-style:italic;text-decoration:underline;">Plastic Limit</span></div>
<div class="a" style="left:1591.46px;top:1699px;"><span class="l f7">&lt;</span></div>
<div class="a" style="left:1607.24px;top:1699px;"><span class="l f7">PL</span></div>
<div class="a" style="left:1591.46px;top:1710px;"><span class="l f7">=</span></div>
<div class="a" style="left:1607.24px;top:1710px;"><span class="l f7">PL</span></div>
<div class="a" style="left:1591.46px;top:1723px;"><span class="l f7">&lt;</span></div>
<div class="a" style="left:1607.24px;top:1723px;"><span class="l f7">PL</span></div>
<div class="a" style="left:1718.3px;top:1617px;"><span class="l f7">VS</span></div>
<div class="a" style="left:1743.32px;top:1617px;"><span class="l f7">-</span></div>
<div class="a" style="left:1754.4px;top:1617px;"><span class="l f7">Very Soft</span></div>
<div class="a" style="left:1717.76px;top:1629px;"><span class="l f7">S</span></div>
<div class="a" style="left:1743.32px;top:1629px;"><span class="l f7">-</span></div>
<div class="a" style="left:1753.86px;top:1629px;"><span class="l f7">Soft</span></div>
<div class="a" style="left:1717.34px;top:1640px;"><span class="l f7">F</span></div>
<div class="a" style="left:1743.32px;top:1640px;"><span class="l f7">-</span></div>
<div class="a" style="left:1753.44px;top:1640px;"><span class="l f7">Firm</span></div>
<div class="a" style="left:1718.3px;top:1652px;"><span class="l f7">VSt</span></div>
<div class="a" style="left:1743.32px;top:1652px;"><span class="l f7">-</span></div>
<div class="a" style="left:1754.4px;top:1652px;"><span class="l f7">Very Stiff</span></div>
<div class="a" style="left:1717.34px;top:1664px;"><span class="l f7">H</span></div>
<div class="a" style="left:1743.32px;top:1664px;"><span class="l f7">-</span></div>
<div class="a" style="left:1753.44px;top:1664px;"><span class="l f7">Hard</span></div>
<div class="a" style="left:1717.34px;top:1675px;"><span class="l f7">Fr</span></div>
<div class="a" style="left:1743.32px;top:1675px;"><span class="l f7">-</span></div>
<div class="a" style="left:1753.44px;top:1675px;"><span class="l f7">Friable</span></div>
<div class="a" style="left:1718.3px;top:1687px;"><span class="l f7">VL</span></div>
<div class="a" style="left:1743.32px;top:1687px;"><span class="l f7">-</span></div>
<div class="a" style="left:1754.4px;top:1687px;"><span class="l f7">Very Loose</span></div>
<div class="a" style="left:1717.34px;top:1698px;"><span class="l f7">L</span></div>
<div class="a" style="left:1743.32px;top:1698px;"><span class="l f7">-</span></div>
<div class="a" style="left:1753.44px;top:1698px;"><span class="l f7">Loose</span></div>
<div class="a" style="left:1717.34px;top:1710px;"><span class="l f7">MD</span></div>
<div class="a" style="left:1743.32px;top:1710px;"><span class="l f7">-</span></div>
<div class="a" style="left:1753.44px;top:1710px;"><span class="l f7">Medium Dense</span></div>
<div class="a" style="left:1717.34px;top:1721px;"><span class="l f7">D</span></div>
<div class="a" style="left:1743.32px;top:1721px;"><span class="l f7">-</span></div>
<div class="a" style="left:1753.44px;top:1721px;"><span class="l f7">Dense</span></div>
<div class="a" style="left:1718.3px;top:1733px;"><span class="l f7">VD</span></div>
<div class="a" style="left:1743.32px;top:1733px;"><span class="l f7">-</span></div>
<div class="a" style="left:1754.4px;top:1733px;"><span class="l f7">Very Dense</span></div>
<div class="a" style="left:904px;top:1742px;transform:rotate(-90deg);"><span class="l f13" style="color:#333;">DGDT-DLST 5.00.6 LIB.GLB  Log  IS AU BOREHOLE 1  DGDT-DLST 5.00.6.GPJ  &lt;&lt;DrawingFile&gt;&gt;  8/7/2019 16:31  10.01.00.01  Datgel Lab and In Situ Tool - DGD | Lib: DGDT-DLST 5.00.6 2019-05-22 Prj: DGDT-DLST 5.00.6 2019-05-22</span></div>
</body></html>
